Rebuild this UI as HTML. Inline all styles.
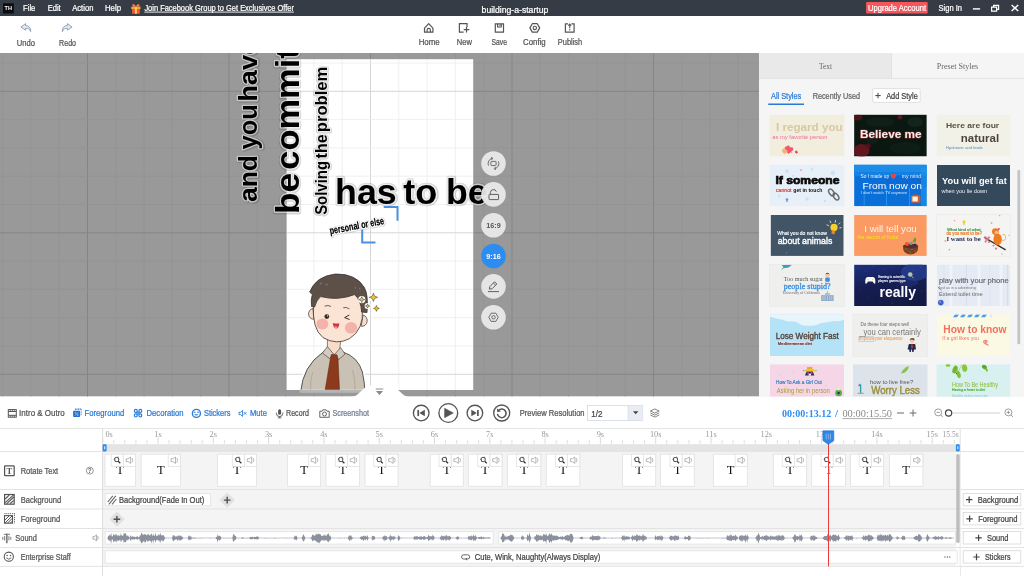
<!DOCTYPE html>
<html><head><meta charset="utf-8"><title>building-a-startup</title>
<style>
html,body{margin:0;padding:0;width:1024px;height:576px;overflow:hidden;background:#fff}
svg{display:block;position:absolute;left:0;top:0;will-change:transform}
text{font-family:"Liberation Sans",sans-serif;white-space:pre}
text.sf{font-family:"Liberation Serif",serif}
text.mn{font-family:"Liberation Mono",monospace}
</style></head><body>
<svg width="1024" height="576" viewBox="0 0 1024 576">
<rect x="0" y="0" width="1024" height="16" fill="#363c45"/>
<rect x="3" y="3.3" width="10.8" height="10.2" fill="#0c0c0e"/>
<text x="4.6" y="9.6" font-size="5" fill="#fff" textLength="7.4" lengthAdjust="spacingAndGlyphs" font-weight="bold">TH</text>
<text x="23.1" y="11" font-size="8.7" fill="#fff" textLength="12.2" lengthAdjust="spacingAndGlyphs" stroke="#fff" stroke-width="0.24">File</text>
<text x="47.7" y="11" font-size="8.7" fill="#fff" textLength="13" lengthAdjust="spacingAndGlyphs" stroke="#fff" stroke-width="0.24">Edit</text>
<text x="72.2" y="11" font-size="8.7" fill="#fff" textLength="21.2" lengthAdjust="spacingAndGlyphs" stroke="#fff" stroke-width="0.24">Action</text>
<text x="105" y="11" font-size="8.7" fill="#fff" textLength="16" lengthAdjust="spacingAndGlyphs" stroke="#fff" stroke-width="0.24">Help</text>
<g>
<rect x="131.3" y="6.6" width="9.2" height="2.6" fill="#f7a23b"/>
<rect x="132" y="9" width="7.8" height="4.7" fill="#f2553d"/>
<rect x="134.9" y="6.6" width="2" height="7.1" fill="#fbd24a"/>
<path d="M135.9 6.6 C133.5 2.5 131.5 4.5 133.2 6.6 Z M135.9 6.6 C138.3 2.5 140.3 4.5 138.6 6.6 Z" fill="#f7a23b" stroke="#f2553d" stroke-width="0.5"/>
</g>
<text x="144.4" y="11" font-size="8.7" fill="#fff" textLength="149.5" lengthAdjust="spacingAndGlyphs" stroke="#fff" stroke-width="0.24">Join Facebook Group to Get Exclusivce Offer</text>
<line x1="144.4" y1="12.1" x2="293.9" y2="12.1" stroke="#fff" stroke-width="0.9" />
<text x="481.6" y="12.8" font-size="8.9" fill="#fff" textLength="66.7" lengthAdjust="spacingAndGlyphs" stroke="#fff" stroke-width="0.24">building-a-startup</text>
<rect x="866.1" y="1.9" width="61.6" height="11.7" fill="#f5565c" rx="1"/>
<text x="868" y="11" font-size="8.7" fill="#fff" textLength="58.1" lengthAdjust="spacingAndGlyphs" stroke="#fff" stroke-width="0.24">Upgrade Account</text>
<text x="938.5" y="11" font-size="8.7" fill="#fff" textLength="23.5" lengthAdjust="spacingAndGlyphs" stroke="#fff" stroke-width="0.24">Sign In</text>
<line x1="972.9" y1="8.9" x2="980.1" y2="8.9" stroke="#fff" stroke-width="1.4" />
<path d="M993.6 7.2 V5.4 H998.6 V9.4 H996.9 M991.6 7.2 H996.6 V11.2 H991.6 Z" fill="none" stroke="#fff" stroke-width="1.2"/>
<path d="M1011.6 5 L1018.2 11 M1018.2 5 L1011.6 11" stroke="#fff" stroke-width="1.5" fill="none"/>
<rect x="0" y="16" width="1024" height="37" fill="#fff"/>
<path d="M25.6 23.6 L20.9 27 L25.6 30.2 V28.3 C28.2 28.2 29.8 29.3 30.7 31.6 C30.9 27.7 28.8 25.6 25.6 25.5 Z" fill="#e3e9f1" stroke="#8a9bb3" stroke-width="0.9" stroke-linejoin="round"/>
<path d="M67.4 23.6 L72.1 27 L67.4 30.2 V28.3 C64.8 28.2 63.2 29.3 62.3 31.6 C62.1 27.7 64.2 25.6 67.4 25.5 Z" fill="#e3e9f1" stroke="#8a9bb3" stroke-width="0.9" stroke-linejoin="round"/>
<text x="16.8" y="46" font-size="8.6" fill="#555" textLength="18.2" lengthAdjust="spacingAndGlyphs" stroke="#555" stroke-width="0.24">Undo</text>
<text x="59.1" y="46" font-size="8.6" fill="#555" textLength="16.9" lengthAdjust="spacingAndGlyphs" stroke="#555" stroke-width="0.24">Redo</text>
<path d="M424.5 28.2 L428.7 23.7 L432.9 28.2 V32.2 H424.5 Z" fill="none" stroke="#555" stroke-width="1.2" stroke-linejoin="round"/>
<path d="M427.1 32.2 V30 A1.65 1.65 0 0 1 430.4 30 V32.2" fill="none" stroke="#555" stroke-width="1.1"/>
<text x="418.7" y="44.9" font-size="8.6" fill="#555" textLength="21" lengthAdjust="spacingAndGlyphs" stroke="#555" stroke-width="0.24">Home</text>
<path d="M467 27 V23.7 H459.4 V32.2 H463.6" fill="none" stroke="#555" stroke-width="1.2"/>
<path d="M466.5 26.9 V32.5 M463.7 29.7 H469.3" fill="none" stroke="#555" stroke-width="1.2"/>
<text x="456.8" y="44.9" font-size="8.6" fill="#555" textLength="15.1" lengthAdjust="spacingAndGlyphs" stroke="#555" stroke-width="0.24">New</text>
<path d="M495.3 23.8 H503.5 V32.1 H495.3 Z M497.6 23.8 V27 H501.2 V23.8" fill="none" stroke="#555" stroke-width="1.2"/>
<path d="M499.9 24.5 V26" stroke="#555" stroke-width="0.9"/>
<text x="491.6" y="44.9" font-size="8.6" fill="#555" textLength="15.4" lengthAdjust="spacingAndGlyphs" stroke="#555" stroke-width="0.24">Save</text>
<path d="M529.9 27.9 L532.3 23.7 H537.3 L539.7 27.9 L537.3 32.1 H532.3 Z" fill="none" stroke="#555" stroke-width="1.2" stroke-linejoin="round"/>
<circle cx="534.8" cy="27.9" r="1.7" fill="none" stroke="#555" stroke-width="1.1"/>
<text x="523.1" y="44.9" font-size="8.6" fill="#555" textLength="22.6" lengthAdjust="spacingAndGlyphs" stroke="#555" stroke-width="0.24">Config</text>
<path d="M568 23.8 H565.4 V32.1 H574.1 V23.8 H571.5" fill="none" stroke="#555" stroke-width="1.2"/>
<path d="M569.75 28.2 V24.4 M568.3 25.6 L569.75 24 L571.2 25.6" fill="none" stroke="#555" stroke-width="1.1"/>
<circle cx="569.75" cy="29.7" r="0.7" fill="#555"/>
<text x="557.8" y="44.9" font-size="8.6" fill="#555" textLength="24.4" lengthAdjust="spacingAndGlyphs" stroke="#555" stroke-width="0.24">Publish</text>
<clipPath id="cc"><rect x="0" y="53" width="759" height="343.6"/></clipPath>
<g clip-path="url(#cc)">
<rect x="0" y="53" width="759" height="343.6" fill="#999999"/>
<line x1="2.6" y1="53" x2="2.6" y2="397" stroke="#939393" stroke-width="0.8" />
<line x1="30.9" y1="53" x2="30.9" y2="397" stroke="#939393" stroke-width="0.8" />
<line x1="59.2" y1="53" x2="59.2" y2="397" stroke="#939393" stroke-width="0.8" />
<line x1="87.5" y1="53" x2="87.5" y2="397" stroke="#858585" stroke-width="1" />
<line x1="115.8" y1="53" x2="115.8" y2="397" stroke="#939393" stroke-width="0.8" />
<line x1="144.1" y1="53" x2="144.1" y2="397" stroke="#939393" stroke-width="0.8" />
<line x1="172.4" y1="53" x2="172.4" y2="397" stroke="#939393" stroke-width="0.8" />
<line x1="200.7" y1="53" x2="200.7" y2="397" stroke="#939393" stroke-width="0.8" />
<line x1="229.0" y1="53" x2="229.0" y2="397" stroke="#858585" stroke-width="1" />
<line x1="257.3" y1="53" x2="257.3" y2="397" stroke="#939393" stroke-width="0.8" />
<line x1="285.6" y1="53" x2="285.6" y2="397" stroke="#939393" stroke-width="0.8" />
<line x1="313.9" y1="53" x2="313.9" y2="397" stroke="#939393" stroke-width="0.8" />
<line x1="342.2" y1="53" x2="342.2" y2="397" stroke="#939393" stroke-width="0.8" />
<line x1="370.5" y1="53" x2="370.5" y2="397" stroke="#858585" stroke-width="1" />
<line x1="398.8" y1="53" x2="398.8" y2="397" stroke="#939393" stroke-width="0.8" />
<line x1="427.1" y1="53" x2="427.1" y2="397" stroke="#939393" stroke-width="0.8" />
<line x1="455.4" y1="53" x2="455.4" y2="397" stroke="#939393" stroke-width="0.8" />
<line x1="483.7" y1="53" x2="483.7" y2="397" stroke="#939393" stroke-width="0.8" />
<line x1="512.0" y1="53" x2="512.0" y2="397" stroke="#858585" stroke-width="1" />
<line x1="540.3" y1="53" x2="540.3" y2="397" stroke="#939393" stroke-width="0.8" />
<line x1="568.6" y1="53" x2="568.6" y2="397" stroke="#939393" stroke-width="0.8" />
<line x1="596.9" y1="53" x2="596.9" y2="397" stroke="#939393" stroke-width="0.8" />
<line x1="625.2" y1="53" x2="625.2" y2="397" stroke="#939393" stroke-width="0.8" />
<line x1="653.5" y1="53" x2="653.5" y2="397" stroke="#858585" stroke-width="1" />
<line x1="681.8" y1="53" x2="681.8" y2="397" stroke="#939393" stroke-width="0.8" />
<line x1="710.1" y1="53" x2="710.1" y2="397" stroke="#939393" stroke-width="0.8" />
<line x1="738.4" y1="53" x2="738.4" y2="397" stroke="#939393" stroke-width="0.8" />
<line x1="0" y1="63.0" x2="759" y2="63.0" stroke="#939393" stroke-width="0.8" />
<line x1="0" y1="91.3" x2="759" y2="91.3" stroke="#858585" stroke-width="1" />
<line x1="0" y1="119.6" x2="759" y2="119.6" stroke="#939393" stroke-width="0.8" />
<line x1="0" y1="147.9" x2="759" y2="147.9" stroke="#939393" stroke-width="0.8" />
<line x1="0" y1="176.2" x2="759" y2="176.2" stroke="#939393" stroke-width="0.8" />
<line x1="0" y1="204.5" x2="759" y2="204.5" stroke="#939393" stroke-width="0.8" />
<line x1="0" y1="232.8" x2="759" y2="232.8" stroke="#858585" stroke-width="1" />
<line x1="0" y1="261.1" x2="759" y2="261.1" stroke="#939393" stroke-width="0.8" />
<line x1="0" y1="289.4" x2="759" y2="289.4" stroke="#939393" stroke-width="0.8" />
<line x1="0" y1="317.7" x2="759" y2="317.7" stroke="#939393" stroke-width="0.8" />
<line x1="0" y1="346.0" x2="759" y2="346.0" stroke="#939393" stroke-width="0.8" />
<line x1="0" y1="374.3" x2="759" y2="374.3" stroke="#858585" stroke-width="1" />
<rect x="286.6" y="59.2" width="186.59999999999997" height="330.8" fill="#fff"/>
<line x1="313.9" y1="59.2" x2="313.9" y2="390" stroke="#ececec" stroke-width="0.8" />
<line x1="342.2" y1="59.2" x2="342.2" y2="390" stroke="#ececec" stroke-width="0.8" />
<line x1="370.5" y1="59.2" x2="370.5" y2="390" stroke="#d6d6d6" stroke-width="1" />
<line x1="398.8" y1="59.2" x2="398.8" y2="390" stroke="#ececec" stroke-width="0.8" />
<line x1="427.1" y1="59.2" x2="427.1" y2="390" stroke="#ececec" stroke-width="0.8" />
<line x1="455.4" y1="59.2" x2="455.4" y2="390" stroke="#ececec" stroke-width="0.8" />
<line x1="286.6" y1="63.0" x2="473.2" y2="63.0" stroke="#ececec" stroke-width="0.8" />
<line x1="286.6" y1="91.3" x2="473.2" y2="91.3" stroke="#d6d6d6" stroke-width="1" />
<line x1="286.6" y1="119.6" x2="473.2" y2="119.6" stroke="#ececec" stroke-width="0.8" />
<line x1="286.6" y1="147.9" x2="473.2" y2="147.9" stroke="#ececec" stroke-width="0.8" />
<line x1="286.6" y1="176.2" x2="473.2" y2="176.2" stroke="#ececec" stroke-width="0.8" />
<line x1="286.6" y1="204.5" x2="473.2" y2="204.5" stroke="#ececec" stroke-width="0.8" />
<line x1="286.6" y1="232.8" x2="473.2" y2="232.8" stroke="#d6d6d6" stroke-width="1" />
<line x1="286.6" y1="261.1" x2="473.2" y2="261.1" stroke="#ececec" stroke-width="0.8" />
<line x1="286.6" y1="289.4" x2="473.2" y2="289.4" stroke="#ececec" stroke-width="0.8" />
<line x1="286.6" y1="317.7" x2="473.2" y2="317.7" stroke="#ececec" stroke-width="0.8" />
<line x1="286.6" y1="346.0" x2="473.2" y2="346.0" stroke="#ececec" stroke-width="0.8" />
<line x1="286.6" y1="374.3" x2="473.2" y2="374.3" stroke="#d6d6d6" stroke-width="1" />
<g font-size="25" font-weight="bold" stroke-linejoin="round" fill="#333" stroke="#333" stroke-width="4.2" opacity="0.2">
<text x="-0.75" y="0" transform="translate(0.5 0.5) translate(257.2 201.3) rotate(-90) scale(1.0595 1)">and</text>
<text x="-0.25" y="0" transform="translate(0.5 0.5) translate(257.2 149.2) rotate(-90) scale(1.0212 1)">you</text>
<text x="-1.75" y="0" transform="translate(0.5 0.5) translate(257.2 99.9) rotate(-90) scale(1.0909 1)">have</text>
</g>
<g font-size="25" font-weight="bold" stroke-linejoin="round" fill="#fff" stroke="#fff" stroke-width="2.4" opacity="0.55">
<text x="-0.75" y="0" transform="translate(257.2 201.3) rotate(-90) scale(1.0595 1)">and</text>
<text x="-0.25" y="0" transform="translate(257.2 149.2) rotate(-90) scale(1.0212 1)">you</text>
<text x="-1.75" y="0" transform="translate(257.2 99.9) rotate(-90) scale(1.0909 1)">have</text>
</g>
<g font-size="25" font-weight="bold" stroke-linejoin="round" fill="#000">
<text x="-0.75" y="0" transform="translate(257.2 201.3) rotate(-90) scale(1.0595 1)">and</text>
<text x="-0.25" y="0" transform="translate(257.2 149.2) rotate(-90) scale(1.0212 1)">you</text>
<text x="-1.75" y="0" transform="translate(257.2 99.9) rotate(-90) scale(1.0909 1)">have</text>
</g>
<g font-size="32.5" font-weight="bold" stroke-linejoin="round" fill="#333" stroke="#333" stroke-width="4.4" opacity="0.2">
<text x="-2.11" y="0" transform="translate(0.5 0.5) translate(298.6 211.7) rotate(-90) scale(1.0863 1)">be</text>
<text x="-1.3" y="0" transform="translate(0.5 0.5) translate(298.6 168.3) rotate(-90) scale(1.0586 1)">committed</text>
</g>
<g font-size="32.5" font-weight="bold" stroke-linejoin="round" fill="#fff" stroke="#fff" stroke-width="2.6" opacity="0.55">
<text x="-2.11" y="0" transform="translate(298.6 211.7) rotate(-90) scale(1.0863 1)">be</text>
<text x="-1.3" y="0" transform="translate(298.6 168.3) rotate(-90) scale(1.0586 1)">committed</text>
</g>
<g font-size="32.5" font-weight="bold" stroke-linejoin="round" fill="#000">
<text x="-2.11" y="0" transform="translate(298.6 211.7) rotate(-90) scale(1.0863 1)">be</text>
<text x="-1.3" y="0" transform="translate(298.6 168.3) rotate(-90) scale(1.0586 1)">committed</text>
</g>
<g font-size="16.8" font-weight="bold" stroke-linejoin="round" fill="#333" stroke="#333" stroke-width="4.0" opacity="0.2">
<text x="-0.5" y="0" transform="translate(0.5 0.5) translate(326.9 214.4) rotate(-90) scale(0.889 1)">Solving</text>
<text x="-0.17" y="0" transform="translate(0.5 0.5) translate(326.9 158.3) rotate(-90) scale(0.9532 1)">the</text>
<text x="-1.09" y="0" transform="translate(0.5 0.5) translate(326.9 131.1) rotate(-90) scale(0.9876 1)">problem</text>
</g>
<g font-size="16.8" font-weight="bold" stroke-linejoin="round" fill="#fff" stroke="#fff" stroke-width="2.2" opacity="0.55">
<text x="-0.5" y="0" transform="translate(326.9 214.4) rotate(-90) scale(0.889 1)">Solving</text>
<text x="-0.17" y="0" transform="translate(326.9 158.3) rotate(-90) scale(0.9532 1)">the</text>
<text x="-1.09" y="0" transform="translate(326.9 131.1) rotate(-90) scale(0.9876 1)">problem</text>
</g>
<g font-size="16.8" font-weight="bold" stroke-linejoin="round" fill="#000">
<text x="-0.5" y="0" transform="translate(326.9 214.4) rotate(-90) scale(0.889 1)">Solving</text>
<text x="-0.17" y="0" transform="translate(326.9 158.3) rotate(-90) scale(0.9532 1)">the</text>
<text x="-1.09" y="0" transform="translate(326.9 131.1) rotate(-90) scale(0.9876 1)">problem</text>
</g>
<g font-size="35" font-weight="bold" stroke-linejoin="round" fill="#333" stroke="#333" stroke-width="4.6" opacity="0.2">
<text x="-2.45" y="0" transform="translate(0.5 0.5) translate(337.6 203.6) scale(1.0222 1)">has</text>
<text x="-0.35" y="0" transform="translate(0.5 0.5) translate(403.7 203.6) scale(1.0311 1)">to</text>
<text x="-2.28" y="0" transform="translate(0.5 0.5) translate(448.3 203.6) scale(1.0195 1)">be</text>
</g>
<g font-size="35" font-weight="bold" stroke-linejoin="round" fill="#fff" stroke="#fff" stroke-width="2.8" opacity="0.55">
<text x="-2.45" y="0" transform="translate(337.6 203.6) scale(1.0222 1)">has</text>
<text x="-0.35" y="0" transform="translate(403.7 203.6) scale(1.0311 1)">to</text>
<text x="-2.28" y="0" transform="translate(448.3 203.6) scale(1.0195 1)">be</text>
</g>
<g font-size="35" font-weight="bold" stroke-linejoin="round" fill="#000">
<text x="-2.45" y="0" transform="translate(337.6 203.6) scale(1.0222 1)">has</text>
<text x="-0.35" y="0" transform="translate(403.7 203.6) scale(1.0311 1)">to</text>
<text x="-2.28" y="0" transform="translate(448.3 203.6) scale(1.0195 1)">be</text>
</g>
<text x="330.7" y="234.6" font-size="10.2" font-weight="bold" lengthAdjust="spacingAndGlyphs" stroke-linejoin="round" textLength="55.2" transform="rotate(-10.6 330.3 234.2)" fill="#444" stroke="#444" stroke-width="3.8499999999999996" opacity="0.2">personal or else</text>
<text x="330.3" y="234.2" font-size="10.2" font-weight="bold" lengthAdjust="spacingAndGlyphs" stroke-linejoin="round" textLength="55.2" transform="rotate(-10.6 330.3 234.2)" fill="#fff" stroke="#fff" stroke-width="2.65">personal or else</text>
<text x="330.3" y="234.2" font-size="10.2" font-weight="bold" lengthAdjust="spacingAndGlyphs" stroke-linejoin="round" textLength="55.2" transform="rotate(-10.6 330.3 234.2)" fill="#000" stroke="#000" stroke-width="0.25">personal or else</text>
<path d="M383.7 207.1 H397.5 V220.7" fill="none" stroke="#4a90e2" stroke-width="2"/>
<path d="M362.2 229.4 V242.6 H375.5" fill="none" stroke="#4a90e2" stroke-width="2"/>
<clipPath id="chc"><rect x="280" y="260" width="120" height="129.8"/></clipPath>
<g clip-path="url(#chc)">
<g fill="#fff" stroke="#fff" stroke-width="4.2" stroke-linejoin="round"><path d="M300.6 392 Q303 366 322.6 352.6 L327.8 348 L339.2 348.6 L343 352 Q358 357 362.4 372 Q364.6 382 365 392 Z"/><path d="M327.4 338 L340.8 340 L339.2 353.6 L334 358 L327.4 351.6 Z"/><path d="M313.6 303.6 Q318 286 338.6 286.6 Q359.6 288.6 362.4 308.6 Q364 329.6 349.6 338.6 Q336.6 345.6 323 337.6 Q311.6 328.6 313.6 303.6 Z"/><path d="M309.6 292 Q316 276 335.6 274 Q356 273.6 364.4 287.6 Q368.6 295 367 312.6 L361.6 312 Q361 300 354.6 294.6 Q338 301 320.6 296.6 Q316.4 300 314.6 307 L311.6 306.6 Q310.6 299 312.4 294.6 Z"/><path d="M313 308.6 A4.4 4.8 0 1 0 313.8 319.2 Z"/><path d="M363 315 A4.4 4.9 0 1 1 361.2 326.2 Z"/></g>
<path d="M300.6 392 Q303 366 322.6 352.6 L327.8 348 L339.2 348.6 L343 352 Q358 357 362.4 372 Q364.6 382 365 392 Z" fill="#c9c1b4" stroke="#3a3230" stroke-width="0.8"/>
<path d="M327.4 338 L340.8 340 L339.2 353.6 L334 358 L327.4 351.6 Z" fill="#f7dcc9" stroke="#3a3230" stroke-width="0.6"/>
<path d="M327.4 346.6 L322.4 353 L329.6 358.6 L333.6 354 Z M340.6 347.6 L345 354 L338.6 359.6 L334.4 354.6 Z" fill="#d3cbbf" stroke="#3a3230" stroke-width="0.6" stroke-linejoin="round"/>
<path d="M331.4 354.4 L337 354.8 L338 358.6 L339.6 392 L324.8 392 L330.4 358.4 Z" fill="#8b3a1c" stroke="#5e2410" stroke-width="0.5"/>
<path d="M312.6 372 Q310 382 310.4 392 M352.6 370 Q355.6 381 355 392" fill="none" stroke="#a9a093" stroke-width="0.7"/>
<path d="M313 308.6 A4.4 4.8 0 1 0 313.8 319.2 Z" fill="#f9dcc9" stroke="#3a3230" stroke-width="0.7"/>
<path d="M363 315 A4.4 4.9 0 1 1 361.2 326.2 Z" fill="#f9dcc9" stroke="#3a3230" stroke-width="0.7"/>
<path d="M313.6 303.6 Q318 286 338.6 286.6 Q359.6 288.6 362.4 308.6 Q364 329.6 349.6 338.6 Q336.6 345.6 323 337.6 Q311.6 328.6 313.6 303.6 Z" fill="#fbe4d4" stroke="#3a3230" stroke-width="0.8"/>
<path d="M309.6 292 Q316 276 335.6 274 Q356 273.6 364.4 287.6 Q368.6 295 367 312.6 L361.6 312 Q361 300 354.6 294.6 Q338 301 320.6 296.6 Q316.4 300 314.6 307 L311.6 306.6 Q310.6 299 312.4 294.6 Z" fill="#5d5048" stroke="#3a3230" stroke-width="0.8" stroke-linejoin="round"/>
<g fill="#8a7c72" opacity="0.8"><circle cx="320.8" cy="283.6" r="1"/><circle cx="326.6" cy="284.6" r="1"/><circle cx="355.4" cy="288" r="0.8"/><circle cx="359.8" cy="288.8" r="0.8"/></g>
<ellipse cx="322.4" cy="324" rx="6" ry="5.6" fill="#f3b3aa"/><ellipse cx="351" cy="327.8" rx="6.2" ry="5.8" fill="#f3b3aa"/>
<circle cx="326.8" cy="316.6" r="2.4" fill="#3a2c28"/><circle cx="327.6" cy="315.8" r="0.6" fill="#fff"/>
<path d="M349 315.2 L344.6 317.6 L349.2 319.4" fill="none" stroke="#3a2c28" stroke-width="1" stroke-linejoin="round" stroke-linecap="round"/>
<path d="M325 306 Q328 304.8 330.6 306.2 M343.6 307.6 Q346.6 306.8 349 308.6" fill="none" stroke="#4a3a34" stroke-width="0.8" stroke-linecap="round"/>
<path d="M332.8 323 Q336 323.8 339.4 323.4 Q338.6 328.6 335.8 328.6 Q333.4 328.2 332.8 323 Z" fill="#d8323a"/><path d="M334.4 326.6 Q336 325.8 337.6 326.8 Q336.6 328.6 335.8 328.6 Q334.8 328.4 334.4 326.6Z" fill="#f59a9a"/>
<g stroke="#fff" stroke-width="2.4" fill="#fff"><circle cx="373.4" cy="297.3" r="3.2"/><circle cx="376.4" cy="308.4" r="2.4"/><circle cx="361.8" cy="299.6" r="2.4"/><circle cx="367.6" cy="306" r="1.8"/></g>
<path d="M373.4 293.1 L374.57599999999996 296.124 L377.59999999999997 297.3 L374.57599999999996 298.476 L373.4 301.5 L372.224 298.476 L369.2 297.3 L372.224 296.124 Z" fill="#f3c62f" stroke="#3a3220" stroke-width="0.5" stroke-linejoin="round"/>
<path d="M376.4 305.4 L377.23999999999995 307.56 L379.4 308.4 L377.23999999999995 309.23999999999995 L376.4 311.4 L375.56 309.23999999999995 L373.4 308.4 L375.56 307.56 Z" fill="#f3c62f" stroke="#3a3220" stroke-width="0.5" stroke-linejoin="round"/>
<path d="M361.8 296.6 L362.64 298.76000000000005 L364.8 299.6 L362.64 300.44 L361.8 302.6 L360.96000000000004 300.44 L358.8 299.6 L360.96000000000004 298.76000000000005 Z" fill="#f3c62f" stroke="#3a3220" stroke-width="0.5" stroke-linejoin="round"/>
<path d="M367.6 303.8 L368.216 305.384 L369.8 306 L368.216 306.616 L367.6 308.2 L366.98400000000004 306.616 L365.40000000000003 306 L366.98400000000004 305.384 Z" fill="#f3c62f" stroke="#3a3220" stroke-width="0.5" stroke-linejoin="round"/>
</g>
<rect x="299.5" y="390" width="66.5" height="2.8" fill="#fff" opacity="0.28"/>
<circle cx="493.5" cy="163.5" r="12.3" fill="#ebebeb" fill-opacity="0.93"/>
<circle cx="493.5" cy="194.4" r="12.3" fill="#ebebeb" fill-opacity="0.93"/>
<circle cx="493.5" cy="225.3" r="12.3" fill="#ebebeb" fill-opacity="0.93"/>
<circle cx="493.5" cy="286.4" r="12.3" fill="#ebebeb" fill-opacity="0.93"/>
<circle cx="493.5" cy="317.3" r="12.3" fill="#ebebeb" fill-opacity="0.93"/>
<circle cx="493.5" cy="256" r="12.3" fill="#2d8cf0"/>
<g fill="none" stroke="#606060" stroke-width="0.9"><rect x="490.9" y="161.4" width="5.2" height="4.2" rx="0.6"/><path d="M488.5 165.6 A5.4 5.4 0 0 1 492.4 158.3"/><path d="M498.5 161.4 A5.4 5.4 0 0 1 494.6 168.7"/><path d="M491 157.2 L492.8 158.4 L491.4 160" /><path d="M496 169.8 L494.2 168.6 L495.6 167"/></g>
<g fill="none" stroke="#606060" stroke-width="1"><rect x="489" y="194.4" width="9.6" height="5.2" rx="0.6"/><path d="M490.4 194.4 V192.6 A3.1 3.1 0 0 1 496.4 191.6"/></g>
<text x="493.5" y="227.9" font-size="7.4" fill="#555" textLength="14.4" lengthAdjust="spacingAndGlyphs" text-anchor="middle" font-weight="bold">16:9</text>
<text x="493.5" y="258.6" font-size="7.4" fill="#fff" textLength="14.4" lengthAdjust="spacingAndGlyphs" text-anchor="middle" font-weight="bold">9:16</text>
<g fill="none" stroke="#606060" stroke-width="1"><path d="M488 291.6 H499"/><path d="M489.4 289.2 L489.8 286.6 L494.6 281.8 L496.8 284 L492 288.8 Z" stroke-linejoin="round"/><path d="M493.4 283 L495.6 285.2"/></g>
<g fill="none" stroke="#606060" stroke-width="0.9"><path d="M488.8 317.3 L491.15 313.2 H495.85 L498.2 317.3 L495.85 321.4 H491.15 Z" stroke-linejoin="round"/><circle cx="493.5" cy="317.3" r="1.7"/></g>
<path d="M349 397.2 C361 397.2 361 385.2 373 385.2 H387.5 C399.5 385.2 399.5 397.2 412 397.2 Z" fill="#fff"/>
<path d="M375.7 389 H383.3" stroke="#8a8a8a" stroke-width="1"/><path d="M375.9 391 H383.1 L379.5 394.9 Z" fill="#8a8a8a"/>
</g>
<g id="panel">
<rect x="759" y="53" width="265" height="344" fill="#f5f5f5"/>
<rect x="759.3" y="53" width="132.2" height="25.4" fill="#e9e9e9"/>
<line x1="759" y1="78.4" x2="1024" y2="78.4" stroke="#dedede" stroke-width="0.8" />
<line x1="891.5" y1="53" x2="891.5" y2="78.4" stroke="#dedede" stroke-width="0.8" />
<text x="825.5" y="69.1" font-size="8.3" fill="#666" textLength="13" lengthAdjust="spacingAndGlyphs" text-anchor="middle" class="sf">Text</text>
<text x="957.5" y="69.1" font-size="8.3" fill="#666" textLength="41.5" lengthAdjust="spacingAndGlyphs" text-anchor="middle" class="sf">Preset Styles</text>
<text x="771" y="98.6" font-size="8.6" fill="#2b7bd6" textLength="30.2" lengthAdjust="spacingAndGlyphs" stroke="#2b7bd6" stroke-width="0.24">All Styles</text>
<line x1="768.2" y1="104.2" x2="804" y2="104.2" stroke="#2b7bd6" stroke-width="1.4" />
<text x="812.7" y="98.6" font-size="8.6" fill="#666" textLength="47.3" lengthAdjust="spacingAndGlyphs" stroke="#666" stroke-width="0.24">Recently Used</text>
<rect x="872.6" y="88.6" width="47.6" height="13.8" fill="#fff" stroke="#d9d9d9" stroke-width="0.8" rx="1.5"/>
<path d="M875.3 95.6 H880.7 M878 92.9 V98.3" stroke="#444" stroke-width="1"/>
<text x="886.2" y="98.6" font-size="8.6" fill="#444" textLength="31.6" lengthAdjust="spacingAndGlyphs" stroke="#444" stroke-width="0.24">Add Style</text>
<rect x="1017.4" y="170" width="2.8" height="174.2" fill="#c4c4c4" rx="1"/>
<clipPath id="pc"><rect x="759" y="53" width="265" height="343.6"/></clipPath>
<g clip-path="url(#pc)">
<clipPath id="t1"><rect x="769.3" y="114.6" width="75.3" height="41.9"/></clipPath>
<g clip-path="url(#t1)">
<rect x="769.3" y="114.6" width="75.3" height="41.9" fill="#f2eedd"/>
<text x="776" y="131.1" font-size="11.4" fill="#d8c7a4" textLength="66.7" lengthAdjust="spacingAndGlyphs" font-weight="bold">I regard you</text>
<text x="772.3" y="138.5" font-size="5.4" fill="#ee6d9c" textLength="55.2" lengthAdjust="spacingAndGlyphs">as my favorite person</text>
<path d="M786.5 146.5 c1.2-2 4-1 3.4 1.2 c2.6-1.6 4.6 1 2.6 3 l-4 3.2 l-3.2-3.4 c-1.6-2 0-4.4 1.2-4z" fill="#f4566e"/><path d="M783 149 c1-1.4 3-.6 2.6 1 c1.4-.6 2.6 1 1.4 2.2 l-2.6 2 l-2-2.2 c-1-1.2-.2-2.8.6-3z" fill="#f6b183"/><path d="M795.5 151 c.6-.8 1.6-.2 1.3.6 c.8-.5 1.6.4.9 1.1 l-1.5 1.1 l-1.1-1.2 c-.5-.7 0-1.5.4-1.6z" fill="#e8436a"/><circle cx="791.5" cy="152.6" r="0.8" fill="#f3a0b6"/>
</g>
<clipPath id="t2"><rect x="854.1" y="114.6" width="72.7" height="41.9"/></clipPath>
<g clip-path="url(#t2)">
<rect x="854.1" y="114.6" width="72.7" height="41.9" fill="#0b1812"/>
<g><ellipse cx="861.5" cy="150.5" rx="8" ry="6.5" fill="#6e1620" opacity="0.85"/><ellipse cx="868" cy="146" rx="3" ry="2.4" fill="#5a1219" opacity="0.8"/><ellipse cx="858" cy="117.6" rx="4.2" ry="3" fill="#5c121a" opacity="0.8"/><ellipse cx="900" cy="117.2" rx="2.4" ry="2.2" fill="#6e1620" opacity="0.8"/><ellipse cx="880" cy="122" rx="14" ry="5" fill="#122219" opacity="0.7"/><ellipse cx="905" cy="148" rx="16" ry="6" fill="#101f17" opacity="0.7"/><ellipse cx="915" cy="122" rx="8" ry="5" fill="#16291f" opacity="0.7"/><ellipse cx="872" cy="140" rx="6" ry="4" fill="#112119" opacity="0.7"/></g>
<text x="860" y="138.4" font-size="10.6" fill="#f2ecec" textLength="61.6" lengthAdjust="spacingAndGlyphs" font-weight="bold" stroke="#8a2d28" stroke-width="1.1" paint-order="stroke" stroke-linejoin="round">Believe me</text>
</g>
<clipPath id="t3"><rect x="936.3" y="114.6" width="74.3" height="41.9"/></clipPath>
<g clip-path="url(#t3)">
<rect x="936.3" y="114.6" width="74.3" height="41.9" fill="#f1f1e8"/>
<text x="945.9" y="127.7" font-size="8" fill="#5a4f45" textLength="53.3" lengthAdjust="spacingAndGlyphs" font-weight="bold">Here are four</text>
<text x="960.8" y="142" font-size="11.2" fill="#4e433b" textLength="38.4" lengthAdjust="spacingAndGlyphs" font-weight="bold">natural</text>
<text x="945.9" y="149.3" font-size="4.4" fill="#4a86c8" textLength="36.8" lengthAdjust="spacingAndGlyphs">Hyaluronic acid foods</text>
</g>
<clipPath id="t4"><rect x="769.3" y="164.6" width="75.3" height="41.7"/></clipPath>
<g clip-path="url(#t4)">
<rect x="769.3" y="164.6" width="75.3" height="41.7" fill="#e7f0f8"/>
<g fill="#cfe2f1"><circle cx="787" cy="171" r="2"/><circle cx="793" cy="176" r="1.3"/><circle cx="812" cy="169" r="1.5"/><circle cx="833" cy="173" r="2.4"/><circle cx="807" cy="199" r="1.8"/><circle cx="825" cy="201" r="1.2"/><circle cx="779" cy="196" r="1.4"/><circle cx="820" cy="186" r="1.1"/></g>
<circle cx="787" cy="199.6" r="1.3" fill="#5aa0e0"/><circle cx="787" cy="201.2" r="0.8" fill="#e8703a"/><circle cx="801" cy="170.2" r="0.9" fill="#e89a9a"/>
<text x="775.4" y="184" font-size="10.6" fill="#0a0a0a" textLength="64.1" lengthAdjust="spacingAndGlyphs" font-weight="bold" stroke="#0a0a0a" stroke-width="0.7">If someone</text>
<text x="776" y="191.6" font-size="5" fill="#d8433a" textLength="15.5" lengthAdjust="spacingAndGlyphs"  stroke="#d8433a" stroke-width="0.2">cannot</text>
<text x="793.3" y="191.6" font-size="5" fill="#111" textLength="29.1" lengthAdjust="spacingAndGlyphs" font-weight="bold">get in touch</text>
<g fill="none" stroke="#6b6b6b" stroke-width="1.5"><ellipse cx="831.5" cy="192.5" rx="2.2" ry="3.8" transform="rotate(-35 831.5 192.5)"/><ellipse cx="836" cy="196.5" rx="2.2" ry="3.8" transform="rotate(-35 836 196.5)"/></g>
</g>
<clipPath id="t5"><rect x="854.1" y="164.6" width="72.7" height="41.7"/></clipPath>
<g clip-path="url(#t5)">
<rect x="854.1" y="164.6" width="72.7" height="41.7" fill="#0b6fda"/>
<rect x="854.1" y="164.6" width="72.7" height="8" fill="#1b8ce8"/>
<rect x="854.1" y="172.6" width="72.7" height="3.6" fill="#1380e2"/>
<rect x="886" y="175" width="40.8" height="12" fill="#0a64cc" opacity="0.45"/>
<rect x="921" y="168" width="5.8" height="38.3" fill="#1d97ee" opacity="0.6"/>
<line x1="864.2" y1="186" x2="864.2" y2="206.3" stroke="#2fa4f2" stroke-width="0.7" />
<line x1="886.5" y1="186" x2="886.5" y2="206.3" stroke="#2fa4f2" stroke-width="0.7" />
<line x1="909.5" y1="188" x2="909.5" y2="206.3" stroke="#2fa4f2" stroke-width="0.7" />
<text x="860.5" y="178" font-size="4.8" fill="#e6f1fc" textLength="28.6" lengthAdjust="spacingAndGlyphs">So I made up</text>
<path d="M893.4 175 c.6-1.6 3-1.2 2.9.6 c0 1.6-2 2.6-2.9 3.6 c-.9-1-2.9-2-2.9-3.6 c-.1-1.8 2.3-2.2 2.9-.6z" fill="#f0453c"/>
<text x="901.8" y="178" font-size="4.8" fill="#e6f1fc" textLength="19.3" lengthAdjust="spacingAndGlyphs">my mind</text>
<text x="862.4" y="188.5" font-size="9.9" fill="#fff" textLength="59.6" lengthAdjust="spacingAndGlyphs">From now on</text>
<text x="861.1" y="193.8" font-size="4" fill="#d6e8fb" textLength="46" lengthAdjust="spacingAndGlyphs">I don't watch TV anymore</text>
<g><path d="M913 193.4 L915.4 195.4 L918 193.2" fill="none" stroke="#b4562a" stroke-width="0.7"/><rect x="911" y="195.2" width="9.4" height="7.6" rx="1" fill="#c8602c"/><rect x="912.4" y="196.5" width="5.4" height="5" fill="#fbeee2"/></g>
</g>
<clipPath id="t6"><rect x="937" y="165" width="73" height="41"/></clipPath>
<g clip-path="url(#t6)">
<rect x="937" y="165" width="73" height="41" fill="#34495c"/>
<g fill="#41576b"><circle cx="940" cy="168.0" r="0.4"/><circle cx="946" cy="168.0" r="0.4"/><circle cx="952" cy="168.0" r="0.4"/><circle cx="958" cy="168.0" r="0.4"/><circle cx="964" cy="168.0" r="0.4"/><circle cx="970" cy="168.0" r="0.4"/><circle cx="976" cy="168.0" r="0.4"/><circle cx="982" cy="168.0" r="0.4"/><circle cx="988" cy="168.0" r="0.4"/><circle cx="994" cy="168.0" r="0.4"/><circle cx="1000" cy="168.0" r="0.4"/><circle cx="1006" cy="168.0" r="0.4"/><circle cx="943" cy="173.4" r="0.4"/><circle cx="949" cy="173.4" r="0.4"/><circle cx="955" cy="173.4" r="0.4"/><circle cx="961" cy="173.4" r="0.4"/><circle cx="967" cy="173.4" r="0.4"/><circle cx="973" cy="173.4" r="0.4"/><circle cx="979" cy="173.4" r="0.4"/><circle cx="985" cy="173.4" r="0.4"/><circle cx="991" cy="173.4" r="0.4"/><circle cx="997" cy="173.4" r="0.4"/><circle cx="1003" cy="173.4" r="0.4"/><circle cx="1009" cy="173.4" r="0.4"/><circle cx="940" cy="178.8" r="0.4"/><circle cx="946" cy="178.8" r="0.4"/><circle cx="952" cy="178.8" r="0.4"/><circle cx="958" cy="178.8" r="0.4"/><circle cx="964" cy="178.8" r="0.4"/><circle cx="970" cy="178.8" r="0.4"/><circle cx="976" cy="178.8" r="0.4"/><circle cx="982" cy="178.8" r="0.4"/><circle cx="988" cy="178.8" r="0.4"/><circle cx="994" cy="178.8" r="0.4"/><circle cx="1000" cy="178.8" r="0.4"/><circle cx="1006" cy="178.8" r="0.4"/><circle cx="943" cy="184.2" r="0.4"/><circle cx="949" cy="184.2" r="0.4"/><circle cx="955" cy="184.2" r="0.4"/><circle cx="961" cy="184.2" r="0.4"/><circle cx="967" cy="184.2" r="0.4"/><circle cx="973" cy="184.2" r="0.4"/><circle cx="979" cy="184.2" r="0.4"/><circle cx="985" cy="184.2" r="0.4"/><circle cx="991" cy="184.2" r="0.4"/><circle cx="997" cy="184.2" r="0.4"/><circle cx="1003" cy="184.2" r="0.4"/><circle cx="1009" cy="184.2" r="0.4"/><circle cx="940" cy="189.6" r="0.4"/><circle cx="946" cy="189.6" r="0.4"/><circle cx="952" cy="189.6" r="0.4"/><circle cx="958" cy="189.6" r="0.4"/><circle cx="964" cy="189.6" r="0.4"/><circle cx="970" cy="189.6" r="0.4"/><circle cx="976" cy="189.6" r="0.4"/><circle cx="982" cy="189.6" r="0.4"/><circle cx="988" cy="189.6" r="0.4"/><circle cx="994" cy="189.6" r="0.4"/><circle cx="1000" cy="189.6" r="0.4"/><circle cx="1006" cy="189.6" r="0.4"/><circle cx="943" cy="195.0" r="0.4"/><circle cx="949" cy="195.0" r="0.4"/><circle cx="955" cy="195.0" r="0.4"/><circle cx="961" cy="195.0" r="0.4"/><circle cx="967" cy="195.0" r="0.4"/><circle cx="973" cy="195.0" r="0.4"/><circle cx="979" cy="195.0" r="0.4"/><circle cx="985" cy="195.0" r="0.4"/><circle cx="991" cy="195.0" r="0.4"/><circle cx="997" cy="195.0" r="0.4"/><circle cx="1003" cy="195.0" r="0.4"/><circle cx="1009" cy="195.0" r="0.4"/><circle cx="940" cy="200.4" r="0.4"/><circle cx="946" cy="200.4" r="0.4"/><circle cx="952" cy="200.4" r="0.4"/><circle cx="958" cy="200.4" r="0.4"/><circle cx="964" cy="200.4" r="0.4"/><circle cx="970" cy="200.4" r="0.4"/><circle cx="976" cy="200.4" r="0.4"/><circle cx="982" cy="200.4" r="0.4"/><circle cx="988" cy="200.4" r="0.4"/><circle cx="994" cy="200.4" r="0.4"/><circle cx="1000" cy="200.4" r="0.4"/><circle cx="1006" cy="200.4" r="0.4"/><circle cx="943" cy="205.8" r="0.4"/><circle cx="949" cy="205.8" r="0.4"/><circle cx="955" cy="205.8" r="0.4"/><circle cx="961" cy="205.8" r="0.4"/><circle cx="967" cy="205.8" r="0.4"/><circle cx="973" cy="205.8" r="0.4"/><circle cx="979" cy="205.8" r="0.4"/><circle cx="985" cy="205.8" r="0.4"/><circle cx="991" cy="205.8" r="0.4"/><circle cx="997" cy="205.8" r="0.4"/><circle cx="1003" cy="205.8" r="0.4"/><circle cx="1009" cy="205.8" r="0.4"/></g>
<text x="942" y="184.4" font-size="9.4" fill="#fff" textLength="64.8" lengthAdjust="spacingAndGlyphs" font-weight="bold">You will get fat</text>
<text x="941.4" y="192.9" font-size="5.6" fill="#f0f3f6" textLength="45.7" lengthAdjust="spacingAndGlyphs">when you lie down</text>
</g>
<clipPath id="t7"><rect x="770.6" y="215" width="73.1" height="40.9"/></clipPath>
<g clip-path="url(#t7)">
<rect x="770.6" y="215" width="73.1" height="40.9" fill="#425567"/>
<text x="777.3" y="234.7" font-size="5" fill="#eef2f5" textLength="49.5" lengthAdjust="spacingAndGlyphs"  stroke="#eef2f5" stroke-width="0.2">What you do not know</text>
<text x="777.7" y="243.5" font-size="8.9" fill="#fff" textLength="54.6" lengthAdjust="spacingAndGlyphs"  stroke="#fff" stroke-width="0.36">about animals</text>
<g><path d="M829 226 L826.6 224.6 M831 223 L829.8 220.6 M835.2 222.6 L835.6 220 M838.4 224.4 L840.2 222.6 M839.4 228 L841.6 227.6" stroke="#f4f1d8" stroke-width="0.8"/><circle cx="834" cy="227.4" r="3.6" fill="#f6cf2a"/><path d="M832 230 L835.6 231.4 L834 234.6 L831.4 233.4 Z" fill="#e8862c"/></g>
<circle cx="786.4" cy="252.8" r="0.5" fill="#8aa0ff"/>
</g>
<clipPath id="t8"><rect x="854.1" y="215" width="72.7" height="40.9"/></clipPath>
<g clip-path="url(#t8)">
<rect x="854.1" y="215" width="72.7" height="40.9" fill="#fb9a62"/>
<text x="864.3" y="231.5" font-size="8.6" fill="#fdf3ea" textLength="52.4" lengthAdjust="spacingAndGlyphs">I will tell you</text>
<text x="857.3" y="238.8" font-size="5" fill="#f7e413" textLength="41" lengthAdjust="spacingAndGlyphs">the secret of fruits</text>
<g><path d="M903 246 Q902.6 254.4 910.6 254.4 Q918.6 254.4 918.2 246 Z" fill="#7a3f28"/><ellipse cx="910.6" cy="246" rx="7.6" ry="2.2" fill="#5d2f1f"/><circle cx="907" cy="244" r="2" fill="#e8552c"/><circle cx="911" cy="243.2" r="1.8" fill="#8d8fa8"/><circle cx="915" cy="245" r="1.6" fill="#2b2f6a"/><path d="M912.6 242 q1-4 2.8-4.6 q1.8 2.4-.4 5z" fill="#4cab3a"/><g fill="#7bc043"><circle cx="906" cy="249" r="0.5"/><circle cx="909" cy="251" r="0.5"/><circle cx="912" cy="249.4" r="0.5"/><circle cx="915" cy="251" r="0.5"/><circle cx="910.5" cy="252.8" r="0.5"/></g></g>
</g>
<clipPath id="t9"><rect x="936.3" y="214.6" width="74.3" height="41.6"/></clipPath>
<g clip-path="url(#t9)">
<rect x="936.3" y="214.6" width="74.3" height="41.6" fill="#f4f4f2"/>
<g fill="#f29ab5"><circle cx="954.6" cy="220.6" r="0.8"/><circle cx="999.6" cy="215.6" r="0.8"/><circle cx="991.6" cy="223" r="0.9"/><circle cx="1009" cy="235.4" r="0.7"/><circle cx="945.4" cy="241" r="0.9"/><circle cx="949.4" cy="249.6" r="0.9"/><circle cx="1002" cy="254" r="0.7"/></g>
<circle cx="964" cy="221.8" r="1.5" fill="#f4cf2c"/><rect x="963.5" y="223.2" width="1" height="1.6" fill="#d8a020"/>
<text x="947.1" y="230.9" font-size="4.2" fill="#3f8f4f" textLength="33.7" lengthAdjust="spacingAndGlyphs"  stroke="#3f8f4f" stroke-width="0.17">What kind of what</text>
<text x="946.5" y="235.3" font-size="4.6" fill="#ec7b25" textLength="35.5" lengthAdjust="spacingAndGlyphs"  stroke="#ec7b25" stroke-width="0.18">do you want to be?</text>
<text x="946.5" y="241.3" font-size="6.4" fill="#2a3050" textLength="34.3" lengthAdjust="spacingAndGlyphs" font-weight="bold" class="sf">I want to be</text>
<g><path d="M984 237.2 L1005.6 249.9" stroke="#2c2c2c" stroke-width="1.3"/><path d="M1001 240 q5.4 1.6 4.6-3.4 q-.6-3 -3-2" fill="none" stroke="#f0a060" stroke-width="0.8"/><ellipse cx="997.6" cy="239.4" rx="4.2" ry="5.8" fill="#ee7d22"/><circle cx="995.4" cy="231.6" r="3.4" fill="#ee7d22"/><circle cx="996.4" cy="232.4" r="1.7" fill="#f5b898"/><circle cx="998.8" cy="229" r="1" fill="#e8436a"/><g fill="#ee6a86"><circle cx="987" cy="239.6" r="1.4"/><circle cx="985.4" cy="237.4" r="1.2"/><circle cx="988.8" cy="237.6" r="1.2"/><circle cx="985.6" cy="241.6" r="1.1"/><circle cx="989" cy="242" r="1.1"/><circle cx="996" cy="248.6" r="1.1"/><circle cx="993.4" cy="245.6" r="0.9"/></g></g>
</g>
<rect x="936.3" y="214.6" width="74.3" height="41.6" fill="none" stroke="#e8e8e6" stroke-width="0.6"/>
<clipPath id="t10"><rect x="769.3" y="264.3" width="75.3" height="42.2"/></clipPath>
<g clip-path="url(#t10)">
<rect x="769.3" y="264.3" width="75.3" height="42.2" fill="#efefed"/>
<path d="M781 270.8 L783.4 267 L781.6 265 L792 264.8 L788.6 267.6 L783.6 268.2 Z" fill="#3c9fb2"/>
<text x="783.7" y="281.1" font-size="6.6" fill="#555" textLength="39.3" lengthAdjust="spacingAndGlyphs" class="sf">Too much sugar</text>
<text x="783.7" y="289.1" font-size="8.2" fill="#3b8fe0" textLength="46.9" lengthAdjust="spacingAndGlyphs" class="sf"  stroke="#3b8fe0" stroke-width="0.33">people stupid?</text>
<text x="782.8" y="294.2" font-size="4.3" fill="#666" textLength="37.1" lengthAdjust="spacingAndGlyphs" class="sf">University of California</text>
<g><circle cx="827.5" cy="275" r="2.2" fill="#f1c9a5"/><path d="M825.2 274.4 q2.3-3.4 4.6 0 q-2.3-1.2-4.6 0z" fill="#5a3a26"/><rect x="825.2" y="277.4" width="4.6" height="4.4" rx="1" fill="#3f8fd8"/></g>
<g><rect x="821.2" y="295.2" width="12.4" height="5.8" fill="#8aa6c4"/><rect x="825" y="293" width="4.8" height="2.4" fill="#a9bfd6"/><path d="M827.4 293 V291.2" stroke="#d86a5a" stroke-width="0.6"/><g stroke="#f0f4f8" stroke-width="0.5"><path d="M823 296 V300.4 M825 296 V300.4 M827.4 296 V300.4 M829.8 296 V300.4 M831.8 296 V300.4"/></g></g>
</g>
<rect x="769.3" y="264.3" width="75.3" height="42.2" fill="none" stroke="#e6e6e4" stroke-width="0.6"/>
<linearGradient id="g11" x1="0" y1="0" x2="0.3" y2="1"><stop offset="0" stop-color="#1d2f80"/><stop offset="0.55" stop-color="#151d52"/><stop offset="1" stop-color="#141a46"/></linearGradient>
<clipPath id="t11"><rect x="854.1" y="264.6" width="72.7" height="41.4"/></clipPath>
<g clip-path="url(#t11)">
<rect x="854.1" y="264.6" width="72.7" height="41.4" fill="url(#g11)"/>
<ellipse cx="915" cy="272" rx="14" ry="9" fill="#2c4aa6" opacity="0.55"/><ellipse cx="908" cy="282" rx="10" ry="5" fill="#2a3f92" opacity="0.4"/>
<g fill="#8fa6e8" opacity="0.8"><circle cx="858" cy="268" r="0.35"/><circle cx="866" cy="271" r="0.35"/><circle cx="873" cy="266" r="0.35"/><circle cx="884" cy="269" r="0.35"/><circle cx="893" cy="267" r="0.35"/><circle cx="899" cy="272" r="0.35"/><circle cx="905" cy="268" r="0.35"/><circle cx="913" cy="270" r="0.35"/><circle cx="921" cy="267" r="0.35"/><circle cx="924" cy="276" r="0.35"/><circle cx="918" cy="283" r="0.35"/><circle cx="911" cy="287" r="0.35"/><circle cx="903" cy="291" r="0.35"/><circle cx="922" cy="291" r="0.35"/><circle cx="916" cy="299" r="0.35"/><circle cx="860" cy="290" r="0.35"/><circle cx="868" cy="298" r="0.35"/><circle cx="880" cy="302" r="0.35"/><circle cx="892" cy="303" r="0.35"/><circle cx="861" cy="280" r="0.35"/><circle cx="890" cy="275" r="0.35"/><circle cx="897" cy="286" r="0.35"/></g>
<g><path d="M865.4 283.6 q-.8-6.4 2.4-6.6 h5 q3.2.2 2.4 6.6 q-1.6.6-2.6-2 h-4.6 q-1 2.6-2.6 2z" fill="#fbfbf4"/><circle cx="868" cy="279.6" r="0.7" fill="#e8d44a"/><circle cx="872.8" cy="279.6" r="0.7" fill="#e8d44a"/></g>
<text x="878" y="277.6" font-size="3.6" fill="#e8ecf8" textLength="27" lengthAdjust="spacingAndGlyphs"  stroke="#e8ecf8" stroke-width="0.14">Gaming is scientific</text>
<text x="878" y="281.7" font-size="3.6" fill="#e8ecf8" textLength="27.4" lengthAdjust="spacingAndGlyphs"  stroke="#e8ecf8" stroke-width="0.14">players games type</text>
<circle cx="910.2" cy="274.4" r="2" fill="#8fd0f4" stroke="#d8c04a" stroke-width="0.6"/><path d="M911.6 276 L913.4 278.2" stroke="#d8c04a" stroke-width="0.8"/>
<text x="879.5" y="296.7" font-size="14.2" fill="#fff" textLength="36.5" lengthAdjust="spacingAndGlyphs" font-weight="bold">really</text>
</g>
<clipPath id="t12"><rect x="937" y="264.6" width="73" height="41.4"/></clipPath>
<g clip-path="url(#t12)">
<rect x="937" y="264.6" width="73" height="41.4" fill="#e5ebf5"/>
<g stroke="#f3f6fb" stroke-width="3" opacity="0.8"><path d="M951 264.6 V306 M979 264.6 V306 M1001 264.6 V306"/></g><g stroke="#c5cfdf" stroke-width="0.5"><path d="M966.4 264.6 V306 M1007.6 264.6 V306"/></g><g stroke="#d6deeb" stroke-width="0.5"><path d="M944 264.6 V306 M990 264.6 V306"/></g>
<circle cx="940.8" cy="302.6" r="2.8" fill="#3d62c4"/><circle cx="940" cy="301.8" r="1.2" fill="#6f8fe0"/>
<path d="M938 287 L941.6 290.4" stroke="#4d78d0" stroke-width="0.8"/>
<text x="938.9" y="283.4" font-size="7.7" fill="#6a6a6a" textLength="69.8" lengthAdjust="spacingAndGlyphs" stroke="#6a6a6a" stroke-width="0.2">play with your phone</text>
<text x="938.2" y="289.1" font-size="4" fill="#777" textLength="37.5" lengthAdjust="spacingAndGlyphs">Just as in a advertising</text>
<text x="938.9" y="295.7" font-size="6" fill="#666" textLength="43.8" lengthAdjust="spacingAndGlyphs">Extend toilet time</text>
</g>
<clipPath id="t13"><rect x="770" y="314.3" width="74" height="41.7"/></clipPath>
<g clip-path="url(#t13)">
<rect x="770" y="314.3" width="74" height="41.7" fill="#b4e3f8"/>
<path d="M770 314.3 H844 V319.4 Q840 321.6 836 321 Q830 321.4 826 322.6 Q821 322.4 818 324.4 Q813 326.4 808 325.6 Q802 326.2 799 323.4 Q796 321.2 792 321.6 Q786 321.8 782 319.6 Q776 319 770 316.6 Z" fill="#e8f6fc"/>
<text x="775.7" y="338.5" font-size="8.4" fill="#574238" textLength="63.2" lengthAdjust="spacingAndGlyphs"  stroke="#574238" stroke-width="0.34">Lose Weight Fast</text>
<rect x="777.4" y="341.3" width="34.8" height="4" fill="#f0d4dc" opacity="0.8"/>
<text x="777.7" y="344.6" font-size="4.1" fill="#4a3c3c" textLength="34.3" lengthAdjust="spacingAndGlyphs"  stroke="#4a3c3c" stroke-width="0.16">Mediterranean diet</text>
</g>
<clipPath id="t14"><rect x="852.9" y="314.3" width="74.8" height="42"/></clipPath>
<g clip-path="url(#t14)">
<rect x="852.9" y="314.3" width="74.8" height="42" fill="#efefed"/>
<text x="860.5" y="325.5" font-size="4.8" fill="#666" textLength="48.5" lengthAdjust="spacingAndGlyphs">Do these four steps well</text>
<text x="859.2" y="334.7" font-size="9.3" fill="#777" textLength="61.6" lengthAdjust="spacingAndGlyphs">_you can certainly</text>
<rect x="858.9" y="336.6" width="15" height="4.8" fill="none" stroke="#999" stroke-width="0.4" rx="0.8"/>
<text x="859.2" y="340.4" font-size="4.6" fill="#ee8a3a" textLength="43.2" lengthAdjust="spacingAndGlyphs">Improve your eloquence</text>
<g><circle cx="912" cy="340.8" r="2.3" fill="#f1c9a5"/><path d="M909.6 340 q1-3 4.6-1.6 q.6 1.2 0 2 q-2-1.6-4.6-.4z" fill="#6a3f26"/><path d="M908.8 344 h6.4 l.8 5.4 h-2 l-.4 2.6 h-1.4 l-.2-2.6 h-.8 l-.2 2.6 h-1.4 l-.4-2.6 h-1.6z" fill="#1f2b52"/><path d="M911.6 343.8 h.8 l.5 4 l-.9.8 l-.9-.8z" fill="#d8362c"/><path d="M908.8 344.4 l-2 1.6 M915.2 344.4 l2-1.4" stroke="#e8d0c0" stroke-width="0.8"/></g>
</g>
<rect x="852.9" y="314.3" width="74.8" height="42" fill="none" stroke="#e7e7e5" stroke-width="0.6"/>
<clipPath id="t15"><rect x="936.7" y="314.3" width="73.5" height="42"/></clipPath>
<g clip-path="url(#t15)">
<rect x="936.7" y="314.3" width="73.5" height="42" fill="#fbf8e3"/>
<g fill="#48a0e8"><path d="M953 317.2 l2-2.6 h4 l-2 2.6z M960 317.2 l2-2.6 h4 l-2 2.6z M967 317.2 l2-2.6 h4 l-2 2.6z M974 317.2 l2-2.6 h4 l-2 2.6z M981 317.2 l2-2.6 h4 l-2 2.6z"/></g><circle cx="991" cy="316" r="1.3" fill="#e6e6dc"/>
<text x="943.3" y="332.5" font-size="10.4" fill="#f3705b" textLength="63.2" lengthAdjust="spacingAndGlyphs" font-weight="bold">How to know</text>
<text x="942.3" y="339.7" font-size="5.4" fill="#f07866" textLength="36.6" lengthAdjust="spacingAndGlyphs">If a girl likes you</text>
<path d="M983 341 q2-2.4 4.6-.4 q.4 1.8-1.4 2.6 l2.8 1.8 l-1 .8 l-3-1.6 q-2.2-.6-2-3.2z" fill="#f0838a"/><circle cx="984.6" cy="341.6" r="0.9" fill="#f6c84a"/>
</g>
<clipPath id="t16"><rect x="770" y="364.3" width="74" height="40"/></clipPath>
<g clip-path="url(#t16)">
<rect x="770" y="364.3" width="74" height="40" fill="#f5d6e7"/>
<g><path d="M804 371.2 h11.4 l-1.6-2 h-8.2z" fill="#f0c22c"/><rect x="807" y="367" width="5.4" height="2.4" fill="#e8b020"/><path d="M805 375.6 l1.6-4.2 h6.2 l1.6 4.2z" fill="#28305e"/><circle cx="808" cy="373" r="1" fill="#e04040"/><circle cx="811.6" cy="373" r="1" fill="#e04040"/><rect x="808.6" y="373.6" width="2.4" height="2" fill="#f4f4f4"/><circle cx="803.6" cy="370.6" r="0.7" fill="#48b04a"/><circle cx="816" cy="370.6" r="0.7" fill="#48b04a"/></g>
<g fill="#f5e05a"><circle cx="786" cy="387.6" r="1.2"/><circle cx="777" cy="392" r="0.6"/><circle cx="797" cy="395" r="0.6"/></g><g fill="#9fd0e8"><circle cx="793" cy="372" r="0.5"/><circle cx="826" cy="385.4" r="0.6"/><circle cx="780" cy="375" r="0.5"/></g>
<text x="776" y="383.7" font-size="5.3" fill="#3d7fc0" textLength="45.8" lengthAdjust="spacingAndGlyphs"  stroke="#3d7fc0" stroke-width="0.21">How To Ask a Girl Out</text>
<text x="776.7" y="393.3" font-size="7.4" fill="#a99a38" textLength="53.1" lengthAdjust="spacingAndGlyphs">Asking her in person</text>
<circle cx="838.6" cy="393" r="3.4" fill="#5cb04a"/><circle cx="838.4" cy="388.8" r="1.8" fill="#efe6c8"/><circle cx="838.6" cy="393" r="1.2" fill="#23305a"/><circle cx="835.4" cy="395.4" r="0.7" fill="#f5e05a"/>
</g>
<clipPath id="t17"><rect x="852.9" y="364.3" width="74.8" height="40"/></clipPath>
<g clip-path="url(#t17)">
<rect x="852.9" y="364.3" width="74.8" height="40" fill="#dde3ea"/>
<path d="M901 373.6 Q903 368 909 366 Q908 371.6 902.4 373.2 Z" fill="#7cc242"/><path d="M901 373.6 L909 366" stroke="#a8d878" stroke-width="0.4"/>
<text x="870" y="383.5" font-size="6.2" fill="#555" textLength="43.2" lengthAdjust="spacingAndGlyphs">how to live free?</text>
<text x="871.3" y="393.6" font-size="10.4" fill="#9b8f3a" textLength="48.5" lengthAdjust="spacingAndGlyphs"  stroke="#9b8f3a" stroke-width="0.42">Worry Less</text>
<g><path d="M860.6 384.4 V393" stroke="#2a9aa8" stroke-width="1.3"/><path d="M858.4 386 L860.6 384" stroke="#2a9aa8" stroke-width="0.9"/><path d="M857.6 393.4 H863.6" stroke="#e89a4a" stroke-width="1.1"/><path d="M858 385.2 l2-1.2 v2z" fill="#e04848"/></g>
</g>
<clipPath id="t18"><rect x="936.3" y="364.3" width="74" height="40"/></clipPath>
<g clip-path="url(#t18)">
<rect x="936.3" y="364.3" width="74" height="40" fill="#d8f0f0"/>
<g><path d="M955 364.3 L958 372 M962 364.3 L958 372 L957.6 376" stroke="#c8a878" stroke-width="0.6" fill="none"/><ellipse cx="955" cy="369.6" rx="2.4" ry="4" fill="#72b82e" transform="rotate(20 955 369.6)"/><ellipse cx="964.6" cy="368" rx="2.6" ry="3.8" fill="#86c83a" transform="rotate(-10 964.6 368)"/><ellipse cx="958.6" cy="374.6" rx="2" ry="3.6" fill="#7cc034" transform="rotate(-15 958.6 374.6)"/><ellipse cx="948" cy="365.4" rx="2.4" ry="1.4" fill="#86c83a"/><ellipse cx="984.4" cy="367" rx="2.6" ry="2" fill="#5aa82a" transform="rotate(30 984.4 367)"/><ellipse cx="986.4" cy="369.6" rx="1" ry="2.2" fill="#72b82e" transform="rotate(-30 986.4 369.6)"/><circle cx="956.4" cy="373.4" r="0.5" fill="#223"/></g>
<text x="952" y="386.5" font-size="6.3" fill="#84bc32" textLength="45.9" lengthAdjust="spacingAndGlyphs">How To Be Healthy</text>
<text x="952" y="391.1" font-size="4.1" fill="#4aa830" textLength="33.2" lengthAdjust="spacingAndGlyphs"  stroke="#4aa830" stroke-width="0.16">Having a heart to diet</text>
<text x="952" y="396.6" font-size="4.1" fill="#a8d4d8" textLength="36" lengthAdjust="spacingAndGlyphs"  stroke="#a8d4d8" stroke-width="0.16">Healthy eating every day</text>
</g>
</g>
</g>
<rect x="0" y="397" width="1024" height="179" fill="#fff"/>
<g stroke="#555" fill="none" stroke-width="1"><rect x="8.3" y="409.6" width="8" height="7.6"/><line x1="8.3" y1="411.5" x2="16.3" y2="411.5"/><line x1="8.3" y1="415.3" x2="16.3" y2="415.3"/></g>
<g stroke="#555" stroke-width="0.8"><line x1="10.3" y1="409.6" x2="10.3" y2="411.5"/><line x1="12.3" y1="409.6" x2="12.3" y2="411.5"/><line x1="14.3" y1="409.6" x2="14.3" y2="411.5"/><line x1="10.3" y1="415.3" x2="10.3" y2="417.2"/><line x1="12.3" y1="415.3" x2="12.3" y2="417.2"/><line x1="14.3" y1="415.3" x2="14.3" y2="417.2"/></g>
<text x="19.1" y="416.3" font-size="8.6" fill="#555" textLength="45.7" lengthAdjust="spacingAndGlyphs" stroke="#555" stroke-width="0.24">Intro &amp; Outro</text>
<g><rect x="73.1" y="410.7" width="7" height="6.4" rx="0.8" fill="#1f6fd4"/><path d="M75 415.6 L78.2 412.2" stroke="#e8f1fc" stroke-width="0.6"/><circle cx="75.4" cy="412.8" r="0.6" fill="none" stroke="#e8f1fc" stroke-width="0.4"/><circle cx="77.8" cy="415" r="0.6" fill="none" stroke="#e8f1fc" stroke-width="0.4"/><path d="M75.4 408.4 V410 M77 408.4 V410 M78.6 408.4 V410 M80.2 408.4 V410 M81.2 408.8 V409.8 M81.2 410.6 V411.6 M81.2 412.4 V413.4 M81.2 414.2 V415.2" stroke="#1f6fd4" stroke-width="0.85"/></g>
<text x="84.6" y="416.3" font-size="8.6" fill="#2b7bd6" textLength="39.6" lengthAdjust="spacingAndGlyphs" stroke="#2b7bd6" stroke-width="0.24">Foreground</text>
<g fill="none" stroke="#2b7bd6" stroke-width="1.15"><circle cx="135.8" cy="410.9" r="1.45"/><circle cx="140.3" cy="410.9" r="1.45"/><circle cx="135.8" cy="415.4" r="1.45"/><circle cx="140.3" cy="415.4" r="1.45"/><rect x="137.1" y="412.2" width="1.9" height="1.9" stroke-width="0.95"/></g>
<text x="146.5" y="416.3" font-size="8.6" fill="#2b7bd6" textLength="37.1" lengthAdjust="spacingAndGlyphs" stroke="#2b7bd6" stroke-width="0.24">Decoration</text>
<g><circle cx="196.4" cy="413.4" r="4" fill="none" stroke="#2b7bd6" stroke-width="1.4"/><circle cx="194.8" cy="412.3" r="0.8" fill="#2b7bd6"/><circle cx="198" cy="412.3" r="0.8" fill="#2b7bd6"/><path d="M194.2 414.3 Q196.4 416.8 198.6 414.3 Z" fill="#2b7bd6"/></g>
<text x="203.9" y="416.3" font-size="8.6" fill="#2b7bd6" textLength="26.6" lengthAdjust="spacingAndGlyphs" stroke="#2b7bd6" stroke-width="0.24">Stickers</text>
<g fill="none" stroke="#2b7bd6" stroke-width="0.9"><path d="M239 412.2 H240.6 L242.6 410.4 V416.4 L240.6 414.6 H239 Z"/><path d="M244 412.2 L246.3 414.6 M246.3 412.2 L244 414.6"/></g>
<text x="250" y="416.3" font-size="8.6" fill="#2b7bd6" textLength="17" lengthAdjust="spacingAndGlyphs" stroke="#2b7bd6" stroke-width="0.24">Mute</text>
<g><rect x="278.1" y="409.2" width="3" height="5.6" rx="1.5" fill="#555"/><path d="M276.4 412.6 V413.4 A3.2 3.2 0 0 0 282.8 413.4 V412.6" fill="none" stroke="#555" stroke-width="0.9"/><path d="M279.6 416.4 V417.8 M277.9 417.8 H281.3" stroke="#555" stroke-width="0.9"/></g>
<text x="286" y="416.3" font-size="8.6" fill="#555" textLength="23" lengthAdjust="spacingAndGlyphs" stroke="#555" stroke-width="0.24">Record</text>
<g fill="none" stroke="#555" stroke-width="0.9"><path d="M319.8 411.2 H322 L322.9 409.8 H326.1 L327 411.2 H329.2 V417.3 H319.8 Z"/><circle cx="324.5" cy="414" r="2"/></g>
<text x="332.5" y="416.3" font-size="8.6" fill="#6f7d8f" textLength="36.5" lengthAdjust="spacingAndGlyphs" stroke="#6f7d8f" stroke-width="0.24">Screenshot</text>
<g fill="none" stroke="#555" stroke-width="1.35"><circle cx="421.2" cy="413" r="7.8"/><circle cx="448.3" cy="413" r="9.4"/><circle cx="474.9" cy="413" r="7.8"/><circle cx="501.7" cy="413" r="8"/></g>
<path d="M418.2 409.9 V416.1" stroke="#555" stroke-width="1.7"/><path d="M424.8 409.7 V416.3 L419.3 413 Z" fill="#555"/>
<path d="M444.6 408.3 V417.7 L453.3 413 Z" fill="#555" stroke="#555" stroke-width="0.6" stroke-linejoin="round"/>
<path d="M477.9 409.9 V416.1" stroke="#555" stroke-width="1.7"/><path d="M471.3 409.7 V416.3 L476.8 413 Z" fill="#555"/>
<path d="M498.7 410.3 A4.3 4.3 0 1 1 497.5 413.8" fill="none" stroke="#555" stroke-width="1.5"/><path d="M496.9 408.4 L497.3 412.3 L501.1 411.2 Z" fill="#555"/>
<text x="519.7" y="416.3" font-size="8.6" fill="#555" textLength="64.9" lengthAdjust="spacingAndGlyphs" stroke="#555" stroke-width="0.24">Preview Resolution</text>
<rect x="587.4" y="405.4" width="55.3" height="15" fill="#fff" stroke="#d3dae6" stroke-width="0.8"/>
<rect x="628.2" y="405.8" width="14.1" height="14.2" fill="#e9edf3"/>
<line x1="628.2" y1="405.4" x2="628.2" y2="420.4" stroke="#d3dae6" stroke-width="0.8" />
<path d="M633 411.2 H638.4 L635.7 414.2 Z" fill="#444"/>
<text x="591.3" y="417" font-size="8.6" fill="#444" textLength="11.2" lengthAdjust="spacingAndGlyphs" stroke="#444" stroke-width="0.24">1/2</text>
<g fill="none" stroke="#666" stroke-width="0.8" stroke-linejoin="round"><path d="M654.8 408.9 L659.2 411 L654.8 413.1 L650.4 411 Z"/><path d="M650.4 413 L654.8 415.1 L659.2 413"/><path d="M650.4 415 L654.8 417.1 L659.2 415"/></g>
<text x="781.9" y="417.1" font-size="10.9" fill="#2d8cf0" textLength="49.4" lengthAdjust="spacingAndGlyphs" font-weight="bold" class="sf">00:00:13.12</text>
<text x="835" y="417.1" font-size="10.9" fill="#2d8cf0" font-weight="bold" class="sf">/</text>
<text x="842.4" y="417.1" font-size="10.9" fill="#8a8a8a" textLength="49.6" lengthAdjust="spacingAndGlyphs" class="sf">00:00:15.50</text>
<line x1="842.4" y1="418.6" x2="892" y2="418.6" stroke="#8a8a8a" stroke-width="0.7" />
<line x1="897" y1="413" x2="904" y2="413" stroke="#777" stroke-width="1.1" />
<line x1="909.7" y1="413" x2="916.4" y2="413" stroke="#777" stroke-width="1.1" />
<line x1="913.05" y1="409.6" x2="913.05" y2="416.4" stroke="#777" stroke-width="1.1" />
<g fill="none" stroke="#888" stroke-width="0.8"><circle cx="938.2" cy="412.4" r="3.5"/><path d="M936.5 412.4 H939.9 M940.8 415 L942.8 417"/><circle cx="1008.4" cy="412.4" r="3.5"/><path d="M1006.7 412.4 H1010.1 M1008.4 410.7 V414.1 M1011 415 L1013 417"/></g>
<line x1="952" y1="413" x2="1000.2" y2="413" stroke="#cfcfcf" stroke-width="1" />
<circle cx="948.6" cy="413" r="3.1" fill="#fff" stroke="#444" stroke-width="1.2"/>
<line x1="0" y1="428.5" x2="1024" y2="428.5" stroke="#e4e4e4" stroke-width="1" />
<rect x="103" y="444.2" width="857" height="7.3" fill="#e4e4e4"/>
<line x1="102.7" y1="437.4" x2="102.7" y2="443.6" stroke="#cfcfcf" stroke-width="0.8" />
<line x1="113.8" y1="440" x2="113.8" y2="443.6" stroke="#d6d6d6" stroke-width="0.8" />
<line x1="124.8" y1="440" x2="124.8" y2="443.6" stroke="#d6d6d6" stroke-width="0.8" />
<line x1="135.9" y1="440" x2="135.9" y2="443.6" stroke="#d6d6d6" stroke-width="0.8" />
<line x1="146.9" y1="440" x2="146.9" y2="443.6" stroke="#d6d6d6" stroke-width="0.8" />
<line x1="158.0" y1="437.4" x2="158.0" y2="443.6" stroke="#cfcfcf" stroke-width="0.8" />
<line x1="169.1" y1="440" x2="169.1" y2="443.6" stroke="#d6d6d6" stroke-width="0.8" />
<line x1="180.1" y1="440" x2="180.1" y2="443.6" stroke="#d6d6d6" stroke-width="0.8" />
<line x1="191.2" y1="440" x2="191.2" y2="443.6" stroke="#d6d6d6" stroke-width="0.8" />
<line x1="202.2" y1="440" x2="202.2" y2="443.6" stroke="#d6d6d6" stroke-width="0.8" />
<line x1="213.3" y1="437.4" x2="213.3" y2="443.6" stroke="#cfcfcf" stroke-width="0.8" />
<line x1="224.4" y1="440" x2="224.4" y2="443.6" stroke="#d6d6d6" stroke-width="0.8" />
<line x1="235.4" y1="440" x2="235.4" y2="443.6" stroke="#d6d6d6" stroke-width="0.8" />
<line x1="246.5" y1="440" x2="246.5" y2="443.6" stroke="#d6d6d6" stroke-width="0.8" />
<line x1="257.5" y1="440" x2="257.5" y2="443.6" stroke="#d6d6d6" stroke-width="0.8" />
<line x1="268.6" y1="437.4" x2="268.6" y2="443.6" stroke="#cfcfcf" stroke-width="0.8" />
<line x1="279.7" y1="440" x2="279.7" y2="443.6" stroke="#d6d6d6" stroke-width="0.8" />
<line x1="290.7" y1="440" x2="290.7" y2="443.6" stroke="#d6d6d6" stroke-width="0.8" />
<line x1="301.8" y1="440" x2="301.8" y2="443.6" stroke="#d6d6d6" stroke-width="0.8" />
<line x1="312.8" y1="440" x2="312.8" y2="443.6" stroke="#d6d6d6" stroke-width="0.8" />
<line x1="323.9" y1="437.4" x2="323.9" y2="443.6" stroke="#cfcfcf" stroke-width="0.8" />
<line x1="335.0" y1="440" x2="335.0" y2="443.6" stroke="#d6d6d6" stroke-width="0.8" />
<line x1="346.0" y1="440" x2="346.0" y2="443.6" stroke="#d6d6d6" stroke-width="0.8" />
<line x1="357.1" y1="440" x2="357.1" y2="443.6" stroke="#d6d6d6" stroke-width="0.8" />
<line x1="368.1" y1="440" x2="368.1" y2="443.6" stroke="#d6d6d6" stroke-width="0.8" />
<line x1="379.2" y1="437.4" x2="379.2" y2="443.6" stroke="#cfcfcf" stroke-width="0.8" />
<line x1="390.3" y1="440" x2="390.3" y2="443.6" stroke="#d6d6d6" stroke-width="0.8" />
<line x1="401.3" y1="440" x2="401.3" y2="443.6" stroke="#d6d6d6" stroke-width="0.8" />
<line x1="412.4" y1="440" x2="412.4" y2="443.6" stroke="#d6d6d6" stroke-width="0.8" />
<line x1="423.4" y1="440" x2="423.4" y2="443.6" stroke="#d6d6d6" stroke-width="0.8" />
<line x1="434.5" y1="437.4" x2="434.5" y2="443.6" stroke="#cfcfcf" stroke-width="0.8" />
<line x1="445.6" y1="440" x2="445.6" y2="443.6" stroke="#d6d6d6" stroke-width="0.8" />
<line x1="456.6" y1="440" x2="456.6" y2="443.6" stroke="#d6d6d6" stroke-width="0.8" />
<line x1="467.7" y1="440" x2="467.7" y2="443.6" stroke="#d6d6d6" stroke-width="0.8" />
<line x1="478.7" y1="440" x2="478.7" y2="443.6" stroke="#d6d6d6" stroke-width="0.8" />
<line x1="489.8" y1="437.4" x2="489.8" y2="443.6" stroke="#cfcfcf" stroke-width="0.8" />
<line x1="500.9" y1="440" x2="500.9" y2="443.6" stroke="#d6d6d6" stroke-width="0.8" />
<line x1="511.9" y1="440" x2="511.9" y2="443.6" stroke="#d6d6d6" stroke-width="0.8" />
<line x1="523.0" y1="440" x2="523.0" y2="443.6" stroke="#d6d6d6" stroke-width="0.8" />
<line x1="534.0" y1="440" x2="534.0" y2="443.6" stroke="#d6d6d6" stroke-width="0.8" />
<line x1="545.1" y1="437.4" x2="545.1" y2="443.6" stroke="#cfcfcf" stroke-width="0.8" />
<line x1="556.2" y1="440" x2="556.2" y2="443.6" stroke="#d6d6d6" stroke-width="0.8" />
<line x1="567.2" y1="440" x2="567.2" y2="443.6" stroke="#d6d6d6" stroke-width="0.8" />
<line x1="578.3" y1="440" x2="578.3" y2="443.6" stroke="#d6d6d6" stroke-width="0.8" />
<line x1="589.3" y1="440" x2="589.3" y2="443.6" stroke="#d6d6d6" stroke-width="0.8" />
<line x1="600.4" y1="437.4" x2="600.4" y2="443.6" stroke="#cfcfcf" stroke-width="0.8" />
<line x1="611.5" y1="440" x2="611.5" y2="443.6" stroke="#d6d6d6" stroke-width="0.8" />
<line x1="622.5" y1="440" x2="622.5" y2="443.6" stroke="#d6d6d6" stroke-width="0.8" />
<line x1="633.6" y1="440" x2="633.6" y2="443.6" stroke="#d6d6d6" stroke-width="0.8" />
<line x1="644.6" y1="440" x2="644.6" y2="443.6" stroke="#d6d6d6" stroke-width="0.8" />
<line x1="655.7" y1="437.4" x2="655.7" y2="443.6" stroke="#cfcfcf" stroke-width="0.8" />
<line x1="666.8" y1="440" x2="666.8" y2="443.6" stroke="#d6d6d6" stroke-width="0.8" />
<line x1="677.8" y1="440" x2="677.8" y2="443.6" stroke="#d6d6d6" stroke-width="0.8" />
<line x1="688.9" y1="440" x2="688.9" y2="443.6" stroke="#d6d6d6" stroke-width="0.8" />
<line x1="699.9" y1="440" x2="699.9" y2="443.6" stroke="#d6d6d6" stroke-width="0.8" />
<line x1="711.0" y1="437.4" x2="711.0" y2="443.6" stroke="#cfcfcf" stroke-width="0.8" />
<line x1="722.1" y1="440" x2="722.1" y2="443.6" stroke="#d6d6d6" stroke-width="0.8" />
<line x1="733.1" y1="440" x2="733.1" y2="443.6" stroke="#d6d6d6" stroke-width="0.8" />
<line x1="744.2" y1="440" x2="744.2" y2="443.6" stroke="#d6d6d6" stroke-width="0.8" />
<line x1="755.2" y1="440" x2="755.2" y2="443.6" stroke="#d6d6d6" stroke-width="0.8" />
<line x1="766.3" y1="437.4" x2="766.3" y2="443.6" stroke="#cfcfcf" stroke-width="0.8" />
<line x1="777.4" y1="440" x2="777.4" y2="443.6" stroke="#d6d6d6" stroke-width="0.8" />
<line x1="788.4" y1="440" x2="788.4" y2="443.6" stroke="#d6d6d6" stroke-width="0.8" />
<line x1="799.5" y1="440" x2="799.5" y2="443.6" stroke="#d6d6d6" stroke-width="0.8" />
<line x1="810.5" y1="440" x2="810.5" y2="443.6" stroke="#d6d6d6" stroke-width="0.8" />
<line x1="821.6" y1="437.4" x2="821.6" y2="443.6" stroke="#cfcfcf" stroke-width="0.8" />
<line x1="832.7" y1="440" x2="832.7" y2="443.6" stroke="#d6d6d6" stroke-width="0.8" />
<line x1="843.7" y1="440" x2="843.7" y2="443.6" stroke="#d6d6d6" stroke-width="0.8" />
<line x1="854.8" y1="440" x2="854.8" y2="443.6" stroke="#d6d6d6" stroke-width="0.8" />
<line x1="865.8" y1="440" x2="865.8" y2="443.6" stroke="#d6d6d6" stroke-width="0.8" />
<line x1="876.9" y1="437.4" x2="876.9" y2="443.6" stroke="#cfcfcf" stroke-width="0.8" />
<line x1="888.0" y1="440" x2="888.0" y2="443.6" stroke="#d6d6d6" stroke-width="0.8" />
<line x1="899.0" y1="440" x2="899.0" y2="443.6" stroke="#d6d6d6" stroke-width="0.8" />
<line x1="910.1" y1="440" x2="910.1" y2="443.6" stroke="#d6d6d6" stroke-width="0.8" />
<line x1="921.1" y1="440" x2="921.1" y2="443.6" stroke="#d6d6d6" stroke-width="0.8" />
<line x1="932.2" y1="437.4" x2="932.2" y2="443.6" stroke="#cfcfcf" stroke-width="0.8" />
<line x1="943.3" y1="440" x2="943.3" y2="443.6" stroke="#d6d6d6" stroke-width="0.8" />
<line x1="954.3" y1="440" x2="954.3" y2="443.6" stroke="#d6d6d6" stroke-width="0.8" />
<text x="105.4" y="437" font-size="8.3" fill="#999" class="sf">0s</text>
<text x="158.0" y="437" font-size="8.3" fill="#999" text-anchor="middle" class="sf">1s</text>
<text x="213.3" y="437" font-size="8.3" fill="#999" text-anchor="middle" class="sf">2s</text>
<text x="268.6" y="437" font-size="8.3" fill="#999" text-anchor="middle" class="sf">3s</text>
<text x="323.9" y="437" font-size="8.3" fill="#999" text-anchor="middle" class="sf">4s</text>
<text x="379.2" y="437" font-size="8.3" fill="#999" text-anchor="middle" class="sf">5s</text>
<text x="434.5" y="437" font-size="8.3" fill="#999" text-anchor="middle" class="sf">6s</text>
<text x="489.8" y="437" font-size="8.3" fill="#999" text-anchor="middle" class="sf">7s</text>
<text x="545.1" y="437" font-size="8.3" fill="#999" text-anchor="middle" class="sf">8s</text>
<text x="600.4" y="437" font-size="8.3" fill="#999" text-anchor="middle" class="sf">9s</text>
<text x="655.7" y="437" font-size="8.3" fill="#999" text-anchor="middle" class="sf">10s</text>
<text x="711.0" y="437" font-size="8.3" fill="#999" text-anchor="middle" class="sf">11s</text>
<text x="766.3" y="437" font-size="8.3" fill="#999" text-anchor="middle" class="sf">12s</text>
<text x="821.6" y="437" font-size="8.3" fill="#999" text-anchor="middle" class="sf">13s</text>
<text x="876.9" y="437" font-size="8.3" fill="#999" text-anchor="middle" class="sf">14s</text>
<text x="932.2" y="437" font-size="8.3" fill="#999" text-anchor="middle" class="sf">15s</text>
<text x="942.6" y="437" font-size="8.3" fill="#999" textLength="16" lengthAdjust="spacingAndGlyphs" class="sf">15.5s</text>
<rect x="103" y="452" width="853" height="114.4" fill="#f4f4f4"/>
<line x1="0" y1="451.5" x2="1024" y2="451.5" stroke="#e3e3e3" stroke-width="1" />
<line x1="0" y1="489.5" x2="1024" y2="489.5" stroke="#e3e3e3" stroke-width="1" />
<line x1="0" y1="509" x2="1024" y2="509" stroke="#e3e3e3" stroke-width="1" />
<line x1="0" y1="528.5" x2="1024" y2="528.5" stroke="#e3e3e3" stroke-width="1" />
<line x1="0" y1="547.5" x2="1024" y2="547.5" stroke="#e3e3e3" stroke-width="1" />
<line x1="0" y1="566.4" x2="1024" y2="566.4" stroke="#e3e3e3" stroke-width="1" />
<line x1="102.6" y1="428.5" x2="102.6" y2="576" stroke="#dcdcdc" stroke-width="1" />
<line x1="960.2" y1="428.5" x2="960.2" y2="576" stroke="#e0e0e0" stroke-width="1" />
<rect x="960.7" y="452" width="63.3" height="114" fill="#fff"/>
<line x1="960.7" y1="451.5" x2="1024" y2="451.5" stroke="#e3e3e3" stroke-width="1" />
<line x1="960.7" y1="489.5" x2="1024" y2="489.5" stroke="#e3e3e3" stroke-width="1" />
<line x1="960.7" y1="509" x2="1024" y2="509" stroke="#e3e3e3" stroke-width="1" />
<line x1="960.7" y1="528.5" x2="1024" y2="528.5" stroke="#e3e3e3" stroke-width="1" />
<line x1="960.7" y1="547.5" x2="1024" y2="547.5" stroke="#e3e3e3" stroke-width="1" />
<line x1="960.7" y1="566.4" x2="1024" y2="566.4" stroke="#e3e3e3" stroke-width="1" />
<rect x="103" y="566.9" width="857" height="10" fill="#fff"/>
<rect x="102.6" y="444.2" width="4" height="7.2" fill="#2d8cf0" rx="0.8"/>
<rect x="104" y="446.3" width="1.2" height="3" fill="#cfe3fb"/>
<rect x="955.9" y="444.2" width="3.8" height="7.2" fill="#2d8cf0" rx="0.8"/>
<rect x="957.2" y="446.3" width="1.2" height="3" fill="#cfe3fb"/>
<rect x="956.2" y="454" width="3.5" height="89" fill="#bdbdbd" rx="1.7"/>
<rect x="4.6" y="465.8" width="9.6" height="9.8" rx="0.6" fill="none" stroke="#555" stroke-width="1.25"/>
<text x="9.4" y="473.7" font-size="8.6" fill="#555" text-anchor="middle" font-weight="bold" class="sf">T</text>
<text x="20.7" y="473.8" font-size="8.6" fill="#555" textLength="37.5" lengthAdjust="spacingAndGlyphs" stroke="#555" stroke-width="0.24">Rotate Text</text>
<circle cx="89.8" cy="470.6" r="3.5" fill="none" stroke="#777" stroke-width="0.75"/>
<text x="89.8" y="472.9" font-size="6.4" fill="#666" text-anchor="middle" font-weight="bold">?</text>
<g><rect x="4.6" y="494.5" width="9.6" height="9.7" fill="none" stroke="#555" stroke-width="1.2"/><path d="M5.2 499 L9.4 494.9 M5.2 502.6 L13.6 494.9 M6.6 503.8 L13.8 497 M10 503.8 L13.8 500.4" stroke="#555" stroke-width="1.15"/></g>
<text x="20.7" y="502.8" font-size="8.6" fill="#555" textLength="40.5" lengthAdjust="spacingAndGlyphs" stroke="#555" stroke-width="0.24">Background</text>
<g><rect x="4.5" y="515.6" width="8" height="7.6" fill="none" stroke="#555" stroke-width="1.1"/><path d="M5 520 L9 516 M5 523 L12 516 M7.6 523 L12.2 518.4 M10.4 523 L12.2 521.2" stroke="#555" stroke-width="1"/><path d="M4.4 513.6 H14.4 M14.5 513.2 V523.4" stroke="#555" stroke-width="0.9" stroke-dasharray="1.1 0.8" fill="none"/></g>
<text x="20.7" y="521.9" font-size="8.6" fill="#555" textLength="39.5" lengthAdjust="spacingAndGlyphs" stroke="#555" stroke-width="0.24">Foreground</text>
<g stroke="#7d7d7d" fill="none"><path d="M3.8 534.3 H10" stroke-width="1"/><path d="M2.8 536.8 V539.8 M4.6 536.2 V540.4 M8.9 536.2 V540.4 M10.8 536.8 V539.8" stroke-width="1"/><path d="M6.8 533.6 V543.2" stroke-width="1.7"/></g>
<text x="15.3" y="541.1" font-size="8.6" fill="#555" textLength="21.5" lengthAdjust="spacingAndGlyphs" stroke="#555" stroke-width="0.24">Sound</text>
<g fill="none" stroke="#888" stroke-width="0.7"><path d="M93 536.6 H94.6 L96.4 534.9 V540.9 L94.6 539.2 H93 Z"/><path d="M97.6 536 Q98.9 537.9 97.6 539.8"/></g>
<g><circle cx="8.8" cy="556.7" r="4.6" fill="none" stroke="#555" stroke-width="1.05"/><circle cx="7.1" cy="555.4" r="0.75" fill="#555"/><circle cx="10.5" cy="555.4" r="0.75" fill="#555"/><path d="M6.3 557.8 Q8.8 560.6 11.3 557.8" fill="none" stroke="#555" stroke-width="0.9"/></g>
<text x="20.7" y="560.2" font-size="8.6" fill="#555" textLength="50" lengthAdjust="spacingAndGlyphs" stroke="#555" stroke-width="0.24">Enterprise Staff</text>
<rect x="105" y="454.2" width="30.5" height="32.1" fill="#fff" stroke="#e2e2e2" stroke-width="0.8"/>
<text x="120.2" y="474.2" font-size="12.6" fill="#111" text-anchor="middle" class="sf">T</text>
<rect x="123.3" y="454.2" width="12.2" height="12.3" fill="#fff" stroke="#e2e2e2" stroke-width="0.8"/>
<g fill="none" stroke="#a6a6a6" stroke-width="0.8" stroke-linejoin="round"><path d="M126.1 458.8 H127.9 L130.6 457.0 V463.4 L127.9 461.6 H126.1 Z"/><path d="M131.9 458.0 Q133.7 460.2 131.9 462.4"/></g>
<rect x="111.2" y="454.2" width="12.1" height="12.3" fill="#fff" stroke="#e2e2e2" stroke-width="0.8"/>
<g fill="none" stroke="#2e2e2e" stroke-linejoin="round"><path d="M114.6 458.1 L116.3 457.4 L118.5 457.9 L118.8 460.2 L117.3 461.7 L115.0 461.3 Z" stroke-width="0.85"/><path d="M118.1 461.3 L120.3 463.2" stroke-width="1.25"/><path d="M117.8 456.6 L118.2 457.4 M113.7 459.4 L114.5 459.6" stroke-width="0.6"/></g>
<rect x="141.2" y="454.2" width="39.2" height="32.1" fill="#fff" stroke="#e2e2e2" stroke-width="0.8"/>
<text x="160.8" y="474.2" font-size="12.6" fill="#111" text-anchor="middle" class="sf">T</text>
<rect x="168.2" y="454.2" width="12.2" height="12.3" fill="#fff" stroke="#e2e2e2" stroke-width="0.8"/>
<g fill="none" stroke="#a6a6a6" stroke-width="0.8" stroke-linejoin="round"><path d="M171.0 458.8 H172.8 L175.5 457.0 V463.4 L172.8 461.6 H171.0 Z"/><path d="M176.8 458.0 Q178.6 460.2 176.8 462.4"/></g>
<rect x="217.6" y="454.2" width="39.0" height="32.1" fill="#fff" stroke="#e2e2e2" stroke-width="0.8"/>
<text x="237.1" y="474.2" font-size="12.6" fill="#111" text-anchor="middle" class="sf">T</text>
<rect x="244.4" y="454.2" width="12.2" height="12.3" fill="#fff" stroke="#e2e2e2" stroke-width="0.8"/>
<g fill="none" stroke="#a6a6a6" stroke-width="0.8" stroke-linejoin="round"><path d="M247.2 458.8 H249.0 L251.7 457.0 V463.4 L249.0 461.6 H247.2 Z"/><path d="M253.0 458.0 Q254.8 460.2 253.0 462.4"/></g>
<rect x="232.3" y="454.2" width="12.1" height="12.3" fill="#fff" stroke="#e2e2e2" stroke-width="0.8"/>
<g fill="none" stroke="#2e2e2e" stroke-linejoin="round"><path d="M235.7 458.1 L237.4 457.4 L239.6 457.9 L239.9 460.2 L238.4 461.7 L236.1 461.3 Z" stroke-width="0.85"/><path d="M239.2 461.3 L241.4 463.2" stroke-width="1.25"/><path d="M238.9 456.6 L239.3 457.4 M234.8 459.4 L235.6 459.6" stroke-width="0.6"/></g>
<rect x="287.6" y="454.2" width="33.0" height="32.1" fill="#fff" stroke="#e2e2e2" stroke-width="0.8"/>
<text x="304.1" y="474.2" font-size="12.6" fill="#111" text-anchor="middle" class="sf">T</text>
<rect x="308.4" y="454.2" width="12.2" height="12.3" fill="#fff" stroke="#e2e2e2" stroke-width="0.8"/>
<g fill="none" stroke="#a6a6a6" stroke-width="0.8" stroke-linejoin="round"><path d="M311.2 458.8 H313.0 L315.7 457.0 V463.4 L313.0 461.6 H311.2 Z"/><path d="M317.0 458.0 Q318.8 460.2 317.0 462.4"/></g>
<rect x="326" y="454.2" width="33.6" height="32.1" fill="#fff" stroke="#e2e2e2" stroke-width="0.8"/>
<text x="342.8" y="474.2" font-size="12.6" fill="#111" text-anchor="middle" class="sf">T</text>
<rect x="347.4" y="454.2" width="12.2" height="12.3" fill="#fff" stroke="#e2e2e2" stroke-width="0.8"/>
<g fill="none" stroke="#a6a6a6" stroke-width="0.8" stroke-linejoin="round"><path d="M350.2 458.8 H352.0 L354.7 457.0 V463.4 L352.0 461.6 H350.2 Z"/><path d="M356.0 458.0 Q357.8 460.2 356.0 462.4"/></g>
<rect x="335.3" y="454.2" width="12.1" height="12.3" fill="#fff" stroke="#e2e2e2" stroke-width="0.8"/>
<g fill="none" stroke="#2e2e2e" stroke-linejoin="round"><path d="M338.7 458.1 L340.4 457.4 L342.6 457.9 L342.9 460.2 L341.4 461.7 L339.1 461.3 Z" stroke-width="0.85"/><path d="M342.2 461.3 L344.4 463.2" stroke-width="1.25"/><path d="M341.9 456.6 L342.3 457.4 M337.8 459.4 L338.6 459.6" stroke-width="0.6"/></g>
<rect x="365" y="454.2" width="33" height="32.1" fill="#fff" stroke="#e2e2e2" stroke-width="0.8"/>
<text x="381.5" y="474.2" font-size="12.6" fill="#111" text-anchor="middle" class="sf">T</text>
<rect x="385.8" y="454.2" width="12.2" height="12.3" fill="#fff" stroke="#e2e2e2" stroke-width="0.8"/>
<g fill="none" stroke="#a6a6a6" stroke-width="0.8" stroke-linejoin="round"><path d="M388.6 458.8 H390.4 L393.1 457.0 V463.4 L390.4 461.6 H388.6 Z"/><path d="M394.4 458.0 Q396.2 460.2 394.4 462.4"/></g>
<rect x="373.7" y="454.2" width="12.1" height="12.3" fill="#fff" stroke="#e2e2e2" stroke-width="0.8"/>
<g fill="none" stroke="#2e2e2e" stroke-linejoin="round"><path d="M377.1 458.1 L378.8 457.4 L381.0 457.9 L381.3 460.2 L379.8 461.7 L377.5 461.3 Z" stroke-width="0.85"/><path d="M380.6 461.3 L382.8 463.2" stroke-width="1.25"/><path d="M380.3 456.6 L380.7 457.4 M376.2 459.4 L377.0 459.6" stroke-width="0.6"/></g>
<rect x="430.2" y="454.2" width="33.1" height="32.1" fill="#fff" stroke="#e2e2e2" stroke-width="0.8"/>
<text x="446.8" y="474.2" font-size="12.6" fill="#111" text-anchor="middle" class="sf">T</text>
<rect x="451.1" y="454.2" width="12.2" height="12.3" fill="#fff" stroke="#e2e2e2" stroke-width="0.8"/>
<g fill="none" stroke="#a6a6a6" stroke-width="0.8" stroke-linejoin="round"><path d="M453.9 458.8 H455.7 L458.4 457.0 V463.4 L455.7 461.6 H453.9 Z"/><path d="M459.7 458.0 Q461.5 460.2 459.7 462.4"/></g>
<rect x="439.0" y="454.2" width="12.1" height="12.3" fill="#fff" stroke="#e2e2e2" stroke-width="0.8"/>
<g fill="none" stroke="#2e2e2e" stroke-linejoin="round"><path d="M442.4 458.1 L444.1 457.4 L446.3 457.9 L446.6 460.2 L445.1 461.7 L442.8 461.3 Z" stroke-width="0.85"/><path d="M445.9 461.3 L448.1 463.2" stroke-width="1.25"/><path d="M445.6 456.6 L446.0 457.4 M441.5 459.4 L442.3 459.6" stroke-width="0.6"/></g>
<rect x="468.3" y="454.2" width="33.7" height="32.1" fill="#fff" stroke="#e2e2e2" stroke-width="0.8"/>
<text x="485.1" y="474.2" font-size="12.6" fill="#111" text-anchor="middle" class="sf">T</text>
<rect x="489.8" y="454.2" width="12.2" height="12.3" fill="#fff" stroke="#e2e2e2" stroke-width="0.8"/>
<g fill="none" stroke="#a6a6a6" stroke-width="0.8" stroke-linejoin="round"><path d="M492.6 458.8 H494.4 L497.1 457.0 V463.4 L494.4 461.6 H492.6 Z"/><path d="M498.4 458.0 Q500.2 460.2 498.4 462.4"/></g>
<rect x="477.7" y="454.2" width="12.1" height="12.3" fill="#fff" stroke="#e2e2e2" stroke-width="0.8"/>
<g fill="none" stroke="#2e2e2e" stroke-linejoin="round"><path d="M481.1 458.1 L482.8 457.4 L485.0 457.9 L485.3 460.2 L483.8 461.7 L481.5 461.3 Z" stroke-width="0.85"/><path d="M484.6 461.3 L486.8 463.2" stroke-width="1.25"/><path d="M484.3 456.6 L484.7 457.4 M480.2 459.4 L481.0 459.6" stroke-width="0.6"/></g>
<rect x="507.6" y="454.2" width="33.2" height="32.1" fill="#fff" stroke="#e2e2e2" stroke-width="0.8"/>
<text x="524.2" y="474.2" font-size="12.6" fill="#111" text-anchor="middle" class="sf">T</text>
<rect x="528.6" y="454.2" width="12.2" height="12.3" fill="#fff" stroke="#e2e2e2" stroke-width="0.8"/>
<g fill="none" stroke="#a6a6a6" stroke-width="0.8" stroke-linejoin="round"><path d="M531.4 458.8 H533.2 L535.9 457.0 V463.4 L533.2 461.6 H531.4 Z"/><path d="M537.2 458.0 Q539.0 460.2 537.2 462.4"/></g>
<rect x="516.5" y="454.2" width="12.1" height="12.3" fill="#fff" stroke="#e2e2e2" stroke-width="0.8"/>
<g fill="none" stroke="#2e2e2e" stroke-linejoin="round"><path d="M519.9 458.1 L521.6 457.4 L523.8 457.9 L524.1 460.2 L522.6 461.7 L520.3 461.3 Z" stroke-width="0.85"/><path d="M523.4 461.3 L525.6 463.2" stroke-width="1.25"/><path d="M523.1 456.6 L523.5 457.4 M519.0 459.4 L519.8 459.6" stroke-width="0.6"/></g>
<rect x="546.2" y="454.2" width="33.6" height="32.1" fill="#fff" stroke="#e2e2e2" stroke-width="0.8"/>
<text x="563.0" y="474.2" font-size="12.6" fill="#111" text-anchor="middle" class="sf">T</text>
<rect x="567.6" y="454.2" width="12.2" height="12.3" fill="#fff" stroke="#e2e2e2" stroke-width="0.8"/>
<g fill="none" stroke="#a6a6a6" stroke-width="0.8" stroke-linejoin="round"><path d="M570.4 458.8 H572.2 L574.9 457.0 V463.4 L572.2 461.6 H570.4 Z"/><path d="M576.2 458.0 Q578.0 460.2 576.2 462.4"/></g>
<rect x="555.5" y="454.2" width="12.1" height="12.3" fill="#fff" stroke="#e2e2e2" stroke-width="0.8"/>
<g fill="none" stroke="#2e2e2e" stroke-linejoin="round"><path d="M558.9 458.1 L560.6 457.4 L562.8 457.9 L563.1 460.2 L561.6 461.7 L559.3 461.3 Z" stroke-width="0.85"/><path d="M562.4 461.3 L564.6 463.2" stroke-width="1.25"/><path d="M562.1 456.6 L562.5 457.4 M558.0 459.4 L558.8 459.6" stroke-width="0.6"/></g>
<rect x="622.4" y="454.2" width="33.3" height="32.1" fill="#fff" stroke="#e2e2e2" stroke-width="0.8"/>
<text x="639.0" y="474.2" font-size="12.6" fill="#111" text-anchor="middle" class="sf">T</text>
<rect x="643.5" y="454.2" width="12.2" height="12.3" fill="#fff" stroke="#e2e2e2" stroke-width="0.8"/>
<g fill="none" stroke="#a6a6a6" stroke-width="0.8" stroke-linejoin="round"><path d="M646.3 458.8 H648.1 L650.8 457.0 V463.4 L648.1 461.6 H646.3 Z"/><path d="M652.1 458.0 Q653.9 460.2 652.1 462.4"/></g>
<rect x="631.4" y="454.2" width="12.1" height="12.3" fill="#fff" stroke="#e2e2e2" stroke-width="0.8"/>
<g fill="none" stroke="#2e2e2e" stroke-linejoin="round"><path d="M634.8 458.1 L636.5 457.4 L638.7 457.9 L639.0 460.2 L637.5 461.7 L635.2 461.3 Z" stroke-width="0.85"/><path d="M638.3 461.3 L640.5 463.2" stroke-width="1.25"/><path d="M638.0 456.6 L638.4 457.4 M633.9 459.4 L634.7 459.6" stroke-width="0.6"/></g>
<rect x="660.6" y="454.2" width="33.7" height="32.1" fill="#fff" stroke="#e2e2e2" stroke-width="0.8"/>
<text x="677.5" y="474.2" font-size="12.6" fill="#111" text-anchor="middle" class="sf">T</text>
<rect x="682.1" y="454.2" width="12.2" height="12.3" fill="#fff" stroke="#e2e2e2" stroke-width="0.8"/>
<g fill="none" stroke="#a6a6a6" stroke-width="0.8" stroke-linejoin="round"><path d="M684.9 458.8 H686.7 L689.4 457.0 V463.4 L686.7 461.6 H684.9 Z"/><path d="M690.7 458.0 Q692.5 460.2 690.7 462.4"/></g>
<rect x="670.0" y="454.2" width="12.1" height="12.3" fill="#fff" stroke="#e2e2e2" stroke-width="0.8"/>
<g fill="none" stroke="#2e2e2e" stroke-linejoin="round"><path d="M673.4 458.1 L675.1 457.4 L677.3 457.9 L677.6 460.2 L676.1 461.7 L673.8 461.3 Z" stroke-width="0.85"/><path d="M676.9 461.3 L679.1 463.2" stroke-width="1.25"/><path d="M676.6 456.6 L677.0 457.4 M672.5 459.4 L673.3 459.6" stroke-width="0.6"/></g>
<rect x="713.6" y="454.2" width="33.7" height="32.1" fill="#fff" stroke="#e2e2e2" stroke-width="0.8"/>
<text x="730.5" y="474.2" font-size="12.6" fill="#111" text-anchor="middle" class="sf">T</text>
<rect x="735.1" y="454.2" width="12.2" height="12.3" fill="#fff" stroke="#e2e2e2" stroke-width="0.8"/>
<g fill="none" stroke="#a6a6a6" stroke-width="0.8" stroke-linejoin="round"><path d="M737.9 458.8 H739.7 L742.4 457.0 V463.4 L739.7 461.6 H737.9 Z"/><path d="M743.7 458.0 Q745.5 460.2 743.7 462.4"/></g>
<rect x="773.5" y="454.2" width="33.0" height="32.1" fill="#fff" stroke="#e2e2e2" stroke-width="0.8"/>
<text x="790.0" y="474.2" font-size="12.6" fill="#111" text-anchor="middle" class="sf">T</text>
<rect x="794.3" y="454.2" width="12.2" height="12.3" fill="#fff" stroke="#e2e2e2" stroke-width="0.8"/>
<g fill="none" stroke="#a6a6a6" stroke-width="0.8" stroke-linejoin="round"><path d="M797.1 458.8 H798.9 L801.6 457.0 V463.4 L798.9 461.6 H797.1 Z"/><path d="M802.9 458.0 Q804.7 460.2 802.9 462.4"/></g>
<rect x="782.2" y="454.2" width="12.1" height="12.3" fill="#fff" stroke="#e2e2e2" stroke-width="0.8"/>
<g fill="none" stroke="#2e2e2e" stroke-linejoin="round"><path d="M785.6 458.1 L787.3 457.4 L789.5 457.9 L789.8 460.2 L788.3 461.7 L786.0 461.3 Z" stroke-width="0.85"/><path d="M789.1 461.3 L791.3 463.2" stroke-width="1.25"/><path d="M788.8 456.6 L789.2 457.4 M784.7 459.4 L785.5 459.6" stroke-width="0.6"/></g>
<rect x="811.7" y="454.2" width="33.7" height="32.1" fill="#fff" stroke="#e2e2e2" stroke-width="0.8"/>
<text x="828.5" y="474.2" font-size="12.6" fill="#111" text-anchor="middle" class="sf">T</text>
<rect x="833.2" y="454.2" width="12.2" height="12.3" fill="#fff" stroke="#e2e2e2" stroke-width="0.8"/>
<g fill="none" stroke="#a6a6a6" stroke-width="0.8" stroke-linejoin="round"><path d="M836.0 458.8 H837.8 L840.5 457.0 V463.4 L837.8 461.6 H836.0 Z"/><path d="M841.8 458.0 Q843.6 460.2 841.8 462.4"/></g>
<rect x="821.1" y="454.2" width="12.1" height="12.3" fill="#fff" stroke="#e2e2e2" stroke-width="0.8"/>
<g fill="none" stroke="#2e2e2e" stroke-linejoin="round"><path d="M824.5 458.1 L826.2 457.4 L828.4 457.9 L828.7 460.2 L827.2 461.7 L824.9 461.3 Z" stroke-width="0.85"/><path d="M828.0 461.3 L830.2 463.2" stroke-width="1.25"/><path d="M827.7 456.6 L828.1 457.4 M823.6 459.4 L824.4 459.6" stroke-width="0.6"/></g>
<rect x="850.5" y="454.2" width="33.0" height="32.1" fill="#fff" stroke="#e2e2e2" stroke-width="0.8"/>
<text x="867.0" y="474.2" font-size="12.6" fill="#111" text-anchor="middle" class="sf">T</text>
<rect x="871.3" y="454.2" width="12.2" height="12.3" fill="#fff" stroke="#e2e2e2" stroke-width="0.8"/>
<g fill="none" stroke="#a6a6a6" stroke-width="0.8" stroke-linejoin="round"><path d="M874.1 458.8 H875.9 L878.6 457.0 V463.4 L875.9 461.6 H874.1 Z"/><path d="M879.9 458.0 Q881.7 460.2 879.9 462.4"/></g>
<rect x="859.2" y="454.2" width="12.1" height="12.3" fill="#fff" stroke="#e2e2e2" stroke-width="0.8"/>
<g fill="none" stroke="#2e2e2e" stroke-linejoin="round"><path d="M862.6 458.1 L864.3 457.4 L866.5 457.9 L866.8 460.2 L865.3 461.7 L863.0 461.3 Z" stroke-width="0.85"/><path d="M866.1 461.3 L868.3 463.2" stroke-width="1.25"/><path d="M865.8 456.6 L866.2 457.4 M861.7 459.4 L862.5 459.6" stroke-width="0.6"/></g>
<rect x="889.6" y="454.2" width="33.3" height="32.1" fill="#fff" stroke="#e2e2e2" stroke-width="0.8"/>
<text x="906.2" y="474.2" font-size="12.6" fill="#111" text-anchor="middle" class="sf">T</text>
<rect x="910.7" y="454.2" width="12.2" height="12.3" fill="#fff" stroke="#e2e2e2" stroke-width="0.8"/>
<g fill="none" stroke="#a6a6a6" stroke-width="0.8" stroke-linejoin="round"><path d="M913.5 458.8 H915.3 L918.0 457.0 V463.4 L915.3 461.6 H913.5 Z"/><path d="M919.3 458.0 Q921.1 460.2 919.3 462.4"/></g>
<rect x="105.2" y="493.5" width="105.3" height="12.3" fill="#fff" stroke="#e2e2e2" stroke-width="0.8"/>
<path d="M107.7 502 L112.8 495.9 M108.8 504.3 L115.8 495.9 M112 504.3 L116.4 499" stroke="#6a6a6a" stroke-width="1.15"/>
<text x="119" y="502.8" font-size="8.6" fill="#444" textLength="85.3" lengthAdjust="spacingAndGlyphs" stroke="#444" stroke-width="0.24">Background(Fade In Out)</text>
<rect x="221.79999999999998" y="494.70000000000005" width="10.8" height="10.8" fill="#e0e0e0" transform="rotate(45 227.2 500.1)"/>
<path d="M223.89999999999998 500.1 H230.5 M227.2 496.8 V503.40000000000003" stroke="#505050" stroke-width="1.45"/>
<rect x="111.5" y="513.8000000000001" width="10.8" height="10.8" fill="#e0e0e0" transform="rotate(45 116.9 519.2)"/>
<path d="M113.60000000000001 519.2 H120.2 M116.9 515.9000000000001 V522.5" stroke="#505050" stroke-width="1.45"/>
<rect x="105.2" y="531.7" width="388" height="12.4" fill="#fff" stroke="#e2e2e2" stroke-width="0.8"/>
<rect x="498.8" y="531.7" width="456.6" height="12.4" fill="#fff" stroke="#e2e2e2" stroke-width="0.8"/>
<path d="M107.0 537.7L107.6 537.7L108.2 535.9L108.8 535.7L109.4 534.3L110.0 536.2L110.6 534.9L111.2 532.7L111.8 536.5L112.4 536.4L113.0 536.1L113.6 533.6L114.2 535.0L114.8 535.2L115.4 533.4L116.0 536.1L116.6 534.1L117.2 535.0L117.8 536.4L118.4 534.7L119.0 535.9L119.6 536.3L120.2 532.5L120.8 536.3L121.4 534.2L122.0 535.7L122.6 535.8L123.2 535.8L123.8 532.4L124.4 533.7L125.0 533.4L125.6 533.0L126.2 534.2L126.8 536.5L127.4 535.7L128.0 535.2L128.6 536.2L129.2 537.5L129.8 537.3L130.4 535.6L131.0 535.5L131.6 537.2L132.2 536.8L132.8 535.7L133.4 536.8L134.0 536.9L134.6 536.4L135.2 537.2L135.8 536.9L136.4 536.7L137.0 536.5L137.6 536.1L138.2 537.4L138.8 537.0L139.4 536.9L140.0 534.7L140.6 535.9L141.2 532.8L141.8 533.2L142.4 533.8L143.0 535.0L143.6 534.6L144.2 534.6L144.8 533.9L145.4 534.2L146.0 534.8L146.6 535.6L147.2 534.7L147.8 534.2L148.4 533.2L149.0 535.4L149.6 535.4L150.2 534.8L150.8 534.7L151.4 533.1L152.0 535.3L152.6 535.9L153.2 533.1L153.8 536.1L154.4 536.0L155.0 534.6L155.6 532.8L156.2 536.5L156.8 535.7L157.4 535.3L158.0 535.9L158.6 533.8L159.2 535.8L159.8 534.3L160.4 532.4L161.0 535.5L161.6 534.9L162.2 535.9L162.8 534.8L163.4 535.1L164.0 535.7L164.6 537.0L165.2 537.7L165.8 537.7L166.4 537.7L167.0 537.7L167.6 537.7L168.2 537.7L168.8 537.7L169.4 537.7L170.0 537.7L170.6 537.7L171.2 537.7L171.8 537.7L172.4 536.9L173.0 534.7L173.6 535.5L174.2 535.2L174.8 536.2L175.4 536.5L176.0 536.5L176.6 536.3L177.2 536.7L177.8 535.0L178.4 535.8L179.0 536.6L179.6 535.4L180.2 535.1L180.8 536.1L181.4 536.4L182.0 536.3L182.6 537.0L183.2 537.7L183.8 537.7L184.4 537.7L185.0 537.7L185.6 537.7L186.2 537.7L186.8 537.7L187.4 537.7L188.0 537.4L188.6 535.2L189.2 536.7L189.8 535.3L190.4 536.9L191.0 535.8L191.6 537.5L192.2 537.7L192.8 537.4L193.4 537.5L194.0 537.4L194.6 537.4L195.2 537.7L195.8 537.7L196.4 537.7L197.0 537.7L197.6 537.7L198.2 537.7L198.8 537.7L199.4 537.7L200.0 537.7L200.6 537.7L201.2 537.7L201.8 537.7L202.4 537.7L203.0 537.7L203.6 537.7L204.2 537.7L204.8 537.7L205.4 537.7L206.0 537.7L206.6 537.7L207.2 537.7L207.8 537.7L208.4 537.7L209.0 537.7L209.6 537.7L210.2 537.7L210.8 537.7L211.4 537.7L212.0 537.7L212.6 537.7L213.2 537.7L213.8 537.7L214.4 537.7L215.0 537.7L215.6 537.7L216.2 537.1L216.8 537.0L217.4 533.9L218.0 536.8L218.6 535.5L219.2 535.7L219.8 535.8L220.4 535.9L221.0 537.2L221.6 537.7L222.2 537.7L222.8 537.7L223.4 537.7L224.0 537.7L224.6 537.7L225.2 537.7L225.8 537.7L226.4 537.7L227.0 537.7L227.6 537.7L228.2 537.7L228.8 537.7L229.4 537.7L230.0 537.7L230.6 537.7L231.2 537.7L231.8 537.7L232.4 537.7L233.0 535.0L233.6 533.8L234.2 534.6L234.8 535.8L235.4 535.7L236.0 536.6L236.6 537.7L237.2 537.7L237.8 537.7L238.4 537.7L239.0 537.7L239.6 537.7L240.2 537.7L240.8 537.7L241.4 537.7L242.0 537.4L242.6 537.0L243.2 537.4L243.8 537.7L244.4 537.7L245.0 537.7L245.6 537.7L246.2 537.7L246.8 537.7L247.4 537.7L248.0 537.7L248.6 537.7L249.2 537.7L249.8 537.2L250.4 537.0L251.0 536.8L251.6 536.9L252.2 537.1L252.8 536.8L253.4 537.3L254.0 537.3L254.6 536.7L255.2 536.9L255.8 536.9L256.4 536.6L257.0 536.5L257.6 536.6L258.2 536.8L258.8 537.3L259.4 537.7L260.0 537.7L260.6 537.7L261.2 537.7L261.8 537.7L262.4 537.7L263.0 537.7L263.6 537.7L264.2 537.7L264.8 537.7L265.4 537.7L266.0 537.7L266.6 537.7L267.2 537.7L267.8 537.7L268.4 537.7L269.0 537.7L269.6 537.7L270.2 537.7L270.8 537.7L271.4 537.7L272.0 537.7L272.6 537.7L273.2 537.7L273.8 537.7L274.4 537.7L275.0 537.7L275.6 537.7L276.2 537.7L276.8 537.7L277.4 537.7L278.0 537.7L278.6 537.7L279.2 537.7L279.8 537.7L280.4 537.7L281.0 537.7L281.6 537.7L282.2 537.7L282.8 537.7L283.4 537.7L284.0 537.7L284.6 537.7L285.2 537.7L285.8 537.7L286.4 537.7L287.0 537.7L287.6 537.7L288.2 537.7L288.8 537.7L289.4 537.7L290.0 537.7L290.6 537.7L291.2 537.7L291.8 537.7L292.4 537.7L293.0 537.7L293.6 537.7L294.2 537.3L294.8 535.2L295.4 536.1L296.0 536.4L296.6 535.5L297.2 537.3L297.8 537.7L298.4 537.7L299.0 537.7L299.6 537.7L300.2 537.7L300.8 537.7L301.4 537.7L302.0 537.3L302.6 536.3L303.2 534.0L303.8 535.1L304.4 535.9L305.0 537.2L305.6 537.7L306.2 537.7L306.8 537.7L307.4 537.7L308.0 537.7L308.6 537.7L309.2 537.7L309.8 537.7L310.4 537.7L311.0 537.4L311.6 537.0L312.2 535.1L312.8 534.4L313.4 534.8L314.0 535.8L314.6 536.0L315.2 534.1L315.8 535.7L316.4 534.3L317.0 532.8L317.6 534.9L318.2 533.5L318.8 534.3L319.4 533.4L320.0 534.8L320.6 534.1L321.2 535.8L321.8 536.0L322.4 535.8L323.0 536.3L323.6 534.4L324.2 536.2L324.8 533.9L325.4 536.3L326.0 534.3L326.6 536.3L327.2 534.4L327.8 533.9L328.4 533.1L329.0 534.6L329.6 536.5L330.2 535.1L330.8 537.1L331.4 537.7L332.0 537.7L332.6 537.7L333.2 537.7L333.8 537.7L334.4 537.7L335.0 537.7L335.6 537.7L336.2 537.7L336.8 537.7L337.4 537.7L338.0 537.7L338.6 537.7L339.2 537.7L339.8 537.7L340.4 537.7L341.0 537.7L341.6 537.7L342.2 537.7L342.8 537.7L343.4 537.7L344.0 537.7L344.6 537.7L345.2 537.7L345.8 537.7L346.4 537.7L347.0 537.7L347.6 537.7L348.2 537.2L348.8 536.0L349.4 535.0L350.0 536.3L350.6 535.8L351.2 535.0L351.8 537.1L352.4 537.2L353.0 537.7L353.6 537.7L354.2 537.7L354.8 537.7L355.4 537.7L356.0 537.7L356.6 537.7L357.2 537.7L357.8 537.7L358.4 537.7L359.0 537.7L359.6 537.7L360.2 537.3L360.8 536.8L361.4 536.2L362.0 536.4L362.6 536.6L363.2 535.9L363.8 535.4L364.4 536.8L365.0 535.2L365.6 535.9L366.2 536.8L366.8 536.6L367.4 535.1L368.0 536.8L368.6 537.7L369.2 537.7L369.8 537.7L370.4 537.7L371.0 537.7L371.6 537.7L372.2 535.5L372.8 536.0L373.4 536.0L374.0 536.3L374.6 536.3L375.2 537.7L375.8 537.7L376.4 537.7L377.0 537.7L377.6 537.7L378.2 537.7L378.8 537.7L379.4 537.7L380.0 537.7L380.6 537.7L381.2 537.7L381.8 537.7L382.4 537.2L383.0 537.3L383.6 535.8L384.2 536.5L384.8 534.9L385.4 536.0L386.0 536.3L386.6 535.9L387.2 537.0L387.8 537.7L388.4 537.7L389.0 536.3L389.6 537.0L390.2 533.7L390.8 536.2L391.4 536.1L392.0 536.8L392.6 536.6L393.2 536.5L393.8 535.9L394.4 536.8L395.0 536.5L395.6 537.7L396.2 537.7L396.8 537.7L397.4 537.7L398.0 536.5L398.6 534.9L399.2 536.1L399.8 536.7L400.4 537.7L401.0 537.7L401.6 537.7L402.2 537.7L402.8 537.7L403.4 537.7L404.0 537.7L404.6 537.7L405.2 537.7L405.8 537.7L406.4 537.7L407.0 537.7L407.6 537.7L408.2 537.7L408.8 537.7L409.4 537.7L410.0 537.7L410.6 537.7L411.2 537.7L411.8 537.7L412.4 537.7L413.0 537.7L413.6 537.5L414.2 536.5L414.8 536.3L415.4 536.5L416.0 536.4L416.6 536.0L417.2 537.1L417.8 535.8L418.4 536.9L419.0 536.9L419.6 536.6L420.2 537.0L420.8 535.7L421.4 536.2L422.0 536.9L422.6 537.0L423.2 536.2L423.8 536.5L424.4 535.9L425.0 536.2L425.6 537.3L426.2 536.9L426.8 537.6L427.4 537.1L428.0 536.3L428.6 534.4L429.2 536.0L429.8 536.2L430.4 536.6L431.0 536.2L431.6 536.2L432.2 536.4L432.8 534.3L433.4 536.1L434.0 536.1L434.6 537.7L435.2 537.7L435.8 537.7L436.4 537.7L437.0 537.7L437.6 537.7L438.2 537.7L438.8 537.7L439.4 537.7L440.0 537.4L440.6 536.4L441.2 536.6L441.8 534.9L442.4 536.3L443.0 536.4L443.6 535.4L444.2 536.8L444.8 536.1L445.4 536.2L446.0 534.6L446.6 535.3L447.2 536.8L447.8 535.7L448.4 536.1L449.0 536.8L449.6 535.2L450.2 536.7L450.8 536.8L451.4 537.7L452.0 537.7L452.6 537.7L453.2 537.7L453.8 537.7L454.4 537.7L455.0 537.7L455.6 537.7L456.2 537.0L456.8 536.9L457.4 536.4L458.0 536.0L458.6 537.1L459.2 537.7L459.8 537.7L460.4 537.7L461.0 537.7L461.6 537.7L462.2 537.7L462.8 537.7L463.4 537.7L464.0 537.7L464.6 537.7L465.2 537.7L465.8 537.7L466.4 537.7L467.0 537.7L467.6 537.7L468.2 536.9L468.8 535.4L469.4 536.3L470.0 536.6L470.6 536.3L471.2 534.9L471.8 536.5L472.4 536.3L473.0 536.6L473.6 534.0L474.2 536.4L474.8 535.9L475.4 534.7L476.0 536.6L476.6 537.0L477.2 537.7L477.8 537.5L478.4 537.3L479.0 537.0L479.6 537.0L480.2 537.3L480.8 536.6L481.4 536.3L482.0 537.2L482.6 537.2L483.2 536.6L483.8 537.4L484.4 537.6L485.0 537.2L485.6 537.6L486.2 537.6L486.8 537.4L487.4 537.5L488.0 537.3L488.6 537.5L489.2 537.3L489.8 537.5L490.4 537.7L491.0 537.7L491.0 538.2L490.4 538.3L489.8 538.5L489.2 538.7L488.6 538.4L488.0 538.6L487.4 538.5L486.8 538.5L486.2 538.4L485.6 538.4L485.0 538.9L484.4 538.5L483.8 538.5L483.2 539.3L482.6 538.9L482.0 538.6L481.4 539.5L480.8 539.3L480.2 538.6L479.6 539.0L479.0 539.1L478.4 538.7L477.8 538.5L477.2 538.3L476.6 539.0L476.0 539.6L475.4 541.0L474.8 540.4L474.2 539.9L473.6 541.6L473.0 539.3L472.4 539.3L471.8 539.7L471.2 540.6L470.6 540.2L470.0 539.4L469.4 539.4L468.8 540.4L468.2 539.1L467.6 538.3L467.0 538.4L466.4 538.3L465.8 538.4L465.2 538.3L464.6 538.3L464.0 538.2L463.4 538.3L462.8 538.3L462.2 538.2L461.6 538.3L461.0 538.4L460.4 538.3L459.8 538.3L459.2 538.4L458.6 538.9L458.0 539.8L457.4 539.9L456.8 538.8L456.2 539.0L455.6 538.3L455.0 538.2L454.4 538.3L453.8 538.3L453.2 538.2L452.6 538.4L452.0 538.3L451.4 538.3L450.8 538.9L450.2 539.2L449.6 541.2L449.0 539.0L448.4 540.2L447.8 540.0L447.2 539.1L446.6 540.2L446.0 541.5L445.4 539.4L444.8 539.8L444.2 538.9L443.6 541.1L443.0 539.7L442.4 539.8L441.8 540.7L441.2 539.6L440.6 539.7L440.0 538.5L439.4 538.3L438.8 538.4L438.2 538.3L437.6 538.3L437.0 538.3L436.4 538.3L435.8 538.3L435.2 538.3L434.6 538.3L434.0 539.6L433.4 539.8L432.8 540.8L432.2 539.3L431.6 539.5L431.0 539.4L430.4 539.3L429.8 539.9L429.2 540.5L428.6 541.2L428.0 539.6L427.4 539.1L426.8 538.4L426.2 538.9L425.6 538.7L425.0 539.7L424.4 539.7L423.8 539.9L423.2 539.4L422.6 538.8L422.0 539.4L421.4 539.8L420.8 540.0L420.2 538.9L419.6 539.8L419.0 538.9L418.4 538.8L417.8 540.1L417.2 538.7L416.6 539.7L416.0 539.6L415.4 539.2L414.8 539.9L414.2 539.4L413.6 538.7L413.0 538.3L412.4 538.3L411.8 538.3L411.2 538.3L410.6 538.3L410.0 538.3L409.4 538.2L408.8 538.3L408.2 538.3L407.6 538.3L407.0 538.2L406.4 538.2L405.8 538.3L405.2 538.3L404.6 538.3L404.0 538.3L403.4 538.3L402.8 538.4L402.2 538.3L401.6 538.2L401.0 538.3L400.4 538.4L399.8 539.2L399.2 540.2L398.6 541.0L398.0 539.9L397.4 538.3L396.8 538.3L396.2 538.3L395.6 538.3L395.0 539.4L394.4 539.0L393.8 540.3L393.2 539.4L392.6 539.4L392.0 539.2L391.4 540.2L390.8 540.0L390.2 542.6L389.6 538.8L389.0 539.7L388.4 538.3L387.8 538.3L387.2 539.2L386.6 539.7L386.0 540.2L385.4 540.0L384.8 541.8L384.2 539.3L383.6 540.7L383.0 538.7L382.4 538.7L381.8 538.3L381.2 538.4L380.6 538.3L380.0 538.3L379.4 538.4L378.8 538.3L378.2 538.2L377.6 538.3L377.0 538.3L376.4 538.3L375.8 538.4L375.2 538.3L374.6 539.4L374.0 539.9L373.4 539.6L372.8 539.8L372.2 540.7L371.6 538.3L371.0 538.3L370.4 538.2L369.8 538.3L369.2 538.3L368.6 538.3L368.0 539.4L367.4 540.9L366.8 539.1L366.2 539.0L365.6 540.2L365.0 540.3L364.4 538.9L363.8 541.1L363.2 540.2L362.6 539.5L362.0 539.8L361.4 539.7L360.8 539.1L360.2 538.8L359.6 538.3L359.0 538.3L358.4 538.3L357.8 538.3L357.2 538.3L356.6 538.2L356.0 538.3L355.4 538.3L354.8 538.4L354.2 538.3L353.6 538.3L353.0 538.2L352.4 538.9L351.8 538.9L351.2 540.8L350.6 539.8L350.0 539.5L349.4 541.6L348.8 539.8L348.2 538.9L347.6 538.2L347.0 538.3L346.4 538.3L345.8 538.2L345.2 538.3L344.6 538.4L344.0 538.3L343.4 538.2L342.8 538.3L342.2 538.2L341.6 538.3L341.0 538.3L340.4 538.4L339.8 538.3L339.2 538.3L338.6 538.4L338.0 538.3L337.4 538.3L336.8 538.2L336.2 538.2L335.6 538.3L335.0 538.3L334.4 538.3L333.8 538.3L333.2 538.3L332.6 538.2L332.0 538.3L331.4 538.3L330.8 539.2L330.2 540.9L329.6 539.9L329.0 541.3L328.4 542.5L327.8 541.6L327.2 541.6L326.6 539.5L326.0 541.2L325.4 539.5L324.8 541.3L324.2 539.9L323.6 541.0L323.0 539.3L322.4 540.8L321.8 539.7L321.2 540.7L320.6 541.8L320.0 541.6L319.4 543.6L318.8 542.3L318.2 543.3L317.6 541.4L317.0 543.1L316.4 541.4L315.8 540.3L315.2 541.4L314.6 539.7L314.0 540.6L313.4 540.5L312.8 540.8L312.2 541.6L311.6 539.0L311.0 538.7L310.4 538.3L309.8 538.4L309.2 538.3L308.6 538.3L308.0 538.3L307.4 538.3L306.8 538.3L306.2 538.3L305.6 538.3L305.0 538.8L304.4 540.5L303.8 540.7L303.2 541.9L302.6 540.1L302.0 538.5L301.4 538.3L300.8 538.2L300.2 538.3L299.6 538.3L299.0 538.3L298.4 538.3L297.8 538.2L297.2 538.8L296.6 540.8L296.0 539.6L295.4 539.5L294.8 540.6L294.2 538.8L293.6 538.4L293.0 538.3L292.4 538.3L291.8 538.3L291.2 538.3L290.6 538.3L290.0 538.3L289.4 538.3L288.8 538.3L288.2 538.3L287.6 538.2L287.0 538.2L286.4 538.4L285.8 538.3L285.2 538.3L284.6 538.3L284.0 538.3L283.4 538.3L282.8 538.3L282.2 538.3L281.6 538.3L281.0 538.2L280.4 538.2L279.8 538.3L279.2 538.2L278.6 538.3L278.0 538.3L277.4 538.3L276.8 538.2L276.2 538.2L275.6 538.4L275.0 538.4L274.4 538.4L273.8 538.3L273.2 538.3L272.6 538.3L272.0 538.3L271.4 538.3L270.8 538.3L270.2 538.3L269.6 538.3L269.0 538.3L268.4 538.3L267.8 538.3L267.2 538.4L266.6 538.2L266.0 538.3L265.4 538.3L264.8 538.4L264.2 538.4L263.6 538.3L263.0 538.3L262.4 538.3L261.8 538.3L261.2 538.3L260.6 538.3L260.0 538.3L259.4 538.3L258.8 538.5L258.2 539.3L257.6 539.6L257.0 539.6L256.4 539.2L255.8 539.0L255.2 539.3L254.6 539.4L254.0 538.8L253.4 538.6L252.8 539.3L252.2 539.0L251.6 539.2L251.0 539.5L250.4 539.0L249.8 538.7L249.2 538.4L248.6 538.3L248.0 538.3L247.4 538.4L246.8 538.3L246.2 538.4L245.6 538.3L245.0 538.3L244.4 538.4L243.8 538.3L243.2 538.5L242.6 538.8L242.0 538.7L241.4 538.4L240.8 538.3L240.2 538.3L239.6 538.3L239.0 538.4L238.4 538.3L237.8 538.3L237.2 538.3L236.6 538.3L236.0 539.3L235.4 540.0L234.8 540.1L234.2 541.1L233.6 542.0L233.0 541.3L232.4 538.3L231.8 538.3L231.2 538.3L230.6 538.3L230.0 538.4L229.4 538.3L228.8 538.3L228.2 538.4L227.6 538.3L227.0 538.3L226.4 538.3L225.8 538.3L225.2 538.4L224.6 538.3L224.0 538.3L223.4 538.4L222.8 538.2L222.2 538.3L221.6 538.2L221.0 538.7L220.4 540.0L219.8 540.4L219.2 540.2L218.6 540.3L218.0 539.5L217.4 543.0L216.8 538.9L216.2 539.0L215.6 538.2L215.0 538.2L214.4 538.2L213.8 538.3L213.2 538.3L212.6 538.3L212.0 538.3L211.4 538.3L210.8 538.2L210.2 538.4L209.6 538.4L209.0 538.3L208.4 538.3L207.8 538.2L207.2 538.3L206.6 538.3L206.0 538.2L205.4 538.3L204.8 538.3L204.2 538.3L203.6 538.2L203.0 538.3L202.4 538.3L201.8 538.4L201.2 538.4L200.6 538.3L200.0 538.3L199.4 538.4L198.8 538.3L198.2 538.3L197.6 538.3L197.0 538.4L196.4 538.3L195.8 538.4L195.2 538.4L194.6 538.6L194.0 538.5L193.4 538.5L192.8 538.6L192.2 538.3L191.6 538.4L191.0 540.5L190.4 539.2L189.8 540.6L189.2 539.3L188.6 540.5L188.0 538.5L187.4 538.3L186.8 538.3L186.2 538.3L185.6 538.3L185.0 538.3L184.4 538.3L183.8 538.4L183.2 538.2L182.6 539.0L182.0 539.4L181.4 540.0L180.8 540.2L180.2 540.6L179.6 540.6L179.0 539.3L178.4 539.7L177.8 541.7L177.2 539.5L176.6 539.4L176.0 539.3L175.4 539.7L174.8 540.0L174.2 540.2L173.6 541.1L173.0 541.4L172.4 539.3L171.8 538.3L171.2 538.3L170.6 538.3L170.0 538.3L169.4 538.3L168.8 538.3L168.2 538.4L167.6 538.3L167.0 538.4L166.4 538.3L165.8 538.3L165.2 538.4L164.6 539.1L164.0 540.5L163.4 541.5L162.8 541.6L162.2 540.3L161.6 540.6L161.0 539.9L160.4 542.7L159.8 542.2L159.2 540.1L158.6 541.4L158.0 539.6L157.4 540.1L156.8 540.4L156.2 539.8L155.6 543.0L155.0 541.1L154.4 539.9L153.8 539.9L153.2 544.0L152.6 540.5L152.0 540.4L151.4 543.8L150.8 541.2L150.2 540.9L149.6 540.8L149.0 540.2L148.4 541.6L147.8 542.0L147.2 540.9L146.6 539.8L146.0 541.7L145.4 542.3L144.8 542.9L144.2 540.7L143.6 541.2L143.0 541.6L142.4 543.0L141.8 542.4L141.2 543.8L140.6 540.4L140.0 542.1L139.4 539.1L138.8 539.2L138.2 538.4L137.6 540.0L137.0 539.8L136.4 539.1L135.8 538.9L135.2 538.7L134.6 539.9L134.0 539.4L133.4 538.9L132.8 540.1L132.2 539.1L131.6 538.9L131.0 540.4L130.4 541.0L129.8 538.8L129.2 538.6L128.6 539.5L128.0 540.8L127.4 540.1L126.8 539.6L126.2 541.4L125.6 542.4L125.0 541.7L124.4 542.1L123.8 543.0L123.2 540.0L122.6 539.8L122.0 540.6L121.4 541.9L120.8 539.3L120.2 542.4L119.6 539.6L119.0 540.4L118.4 541.1L117.8 540.0L117.2 541.5L116.6 542.5L116.0 539.5L115.4 542.2L114.8 541.5L114.2 540.9L113.6 542.7L113.0 539.9L112.4 539.4L111.8 539.5L111.2 543.7L110.6 541.8L110.0 540.1L109.4 540.9L108.8 540.3L108.2 540.1L107.6 538.3L107.0 538.3Z" fill="#8a909d"/>
<path d="M500.5 537.7L501.1 536.4L501.7 536.4L502.3 532.4L502.9 534.3L503.5 533.6L504.1 534.6L504.7 536.2L505.3 537.3L505.9 535.3L506.5 536.9L507.1 536.4L507.7 536.8L508.3 535.6L508.9 535.9L509.5 535.8L510.1 535.5L510.7 534.3L511.3 534.7L511.9 535.2L512.5 535.1L513.1 535.9L513.7 536.8L514.3 537.7L514.9 537.7L515.5 537.7L516.1 537.7L516.7 537.7L517.3 537.7L517.9 537.7L518.5 537.7L519.1 537.7L519.7 537.7L520.3 537.7L520.9 537.7L521.5 536.5L522.1 535.0L522.7 536.6L523.3 536.3L523.9 536.7L524.5 537.7L525.1 537.7L525.7 537.7L526.3 537.7L526.9 536.7L527.5 534.0L528.1 535.2L528.7 536.4L529.3 532.2L529.9 534.6L530.5 536.2L531.1 537.7L531.7 537.7L532.3 537.7L532.9 537.7L533.5 537.7L534.1 537.7L534.7 536.2L535.3 536.6L535.9 535.9L536.5 534.0L537.1 534.6L537.7 535.4L538.3 534.4L538.9 535.6L539.5 535.8L540.1 536.1L540.7 535.1L541.3 535.5L541.9 536.6L542.5 536.3L543.1 534.8L543.7 533.7L544.3 534.1L544.9 535.0L545.5 535.4L546.1 532.9L546.7 534.8L547.3 536.5L547.9 535.4L548.5 535.8L549.1 533.6L549.7 533.6L550.3 535.3L550.9 533.7L551.5 533.3L552.1 535.5L552.7 535.3L553.3 535.5L553.9 535.5L554.5 535.4L555.1 536.3L555.7 535.7L556.3 535.0L556.9 536.2L557.5 536.1L558.1 536.2L558.7 536.9L559.3 537.2L559.9 536.7L560.5 536.6L561.1 536.7L561.7 537.0L562.3 535.4L562.9 536.7L563.5 536.9L564.1 537.1L564.7 536.6L565.3 535.5L565.9 536.1L566.5 535.3L567.1 535.2L567.7 534.8L568.3 535.1L568.9 535.8L569.5 535.4L570.1 533.4L570.7 534.0L571.3 533.9L571.9 533.8L572.5 535.0L573.1 536.5L573.7 537.7L574.3 537.7L574.9 537.7L575.5 537.7L576.1 537.7L576.7 537.7L577.3 537.7L577.9 537.7L578.5 537.7L579.1 537.7L579.7 537.7L580.3 537.1L580.9 537.1L581.5 537.0L582.1 536.2L582.7 537.3L583.3 537.7L583.9 537.7L584.5 537.7L585.1 537.7L585.7 537.7L586.3 537.7L586.9 537.7L587.5 537.7L588.1 537.7L588.7 537.7L589.3 537.7L589.9 537.2L590.5 536.5L591.1 536.9L591.7 536.4L592.3 534.4L592.9 536.2L593.5 535.5L594.1 536.5L594.7 536.0L595.3 536.1L595.9 536.2L596.5 536.0L597.1 536.2L597.7 535.8L598.3 535.2L598.9 536.7L599.5 535.9L600.1 536.5L600.7 537.7L601.3 537.7L601.9 537.7L602.5 537.7L603.1 537.7L603.7 537.3L604.3 537.5L604.9 537.5L605.5 537.6L606.1 537.7L606.7 537.7L607.3 537.7L607.9 537.7L608.5 537.7L609.1 537.7L609.7 537.7L610.3 537.7L610.9 537.7L611.5 537.7L612.1 537.7L612.7 537.7L613.3 537.7L613.9 537.7L614.5 537.7L615.1 537.7L615.7 537.7L616.3 537.7L616.9 537.7L617.5 537.7L618.1 537.7L618.7 537.7L619.3 537.7L619.9 537.7L620.5 537.7L621.1 537.5L621.7 537.2L622.3 535.7L622.9 535.1L623.5 536.7L624.1 534.7L624.7 536.8L625.3 536.4L625.9 536.5L626.5 536.3L627.1 536.3L627.7 536.7L628.3 536.7L628.9 536.4L629.5 536.8L630.1 537.7L630.7 537.7L631.3 536.7L631.9 536.7L632.5 534.5L633.1 536.4L633.7 536.6L634.3 535.0L634.9 536.4L635.5 536.1L636.1 535.7L636.7 534.0L637.3 534.4L637.9 535.2L638.5 536.0L639.1 536.0L639.7 535.0L640.3 535.8L640.9 536.6L641.5 536.1L642.1 536.3L642.7 534.4L643.3 534.1L643.9 536.3L644.5 535.7L645.1 535.5L645.7 536.8L646.3 536.4L646.9 537.7L647.5 537.7L648.1 537.7L648.7 537.7L649.3 537.7L649.9 537.7L650.5 537.7L651.1 537.7L651.7 537.7L652.3 537.7L652.9 537.7L653.5 537.7L654.1 537.7L654.7 537.4L655.3 534.8L655.9 536.5L656.5 537.2L657.1 535.7L657.7 536.6L658.3 535.7L658.9 536.7L659.5 536.0L660.1 535.2L660.7 537.1L661.3 534.9L661.9 536.8L662.5 535.9L663.1 537.3L663.7 537.7L664.3 537.7L664.9 537.7L665.5 537.7L666.1 537.7L666.7 537.7L667.3 537.7L667.9 537.7L668.5 537.7L669.1 537.5L669.7 537.1L670.3 535.8L670.9 535.6L671.5 535.8L672.1 536.2L672.7 536.3L673.3 536.8L673.9 536.1L674.5 535.7L675.1 534.7L675.7 536.3L676.3 536.1L676.9 535.4L677.5 536.7L678.1 535.0L678.7 536.4L679.3 537.7L679.9 537.7L680.5 537.7L681.1 537.7L681.7 537.7L682.3 537.7L682.9 537.7L683.5 537.7L684.1 537.7L684.7 536.4L685.3 535.7L685.9 537.2L686.5 537.0L687.1 537.0L687.7 537.0L688.3 535.8L688.9 535.6L689.5 536.0L690.1 535.8L690.7 537.4L691.3 537.7L691.9 537.7L692.5 537.7L693.1 537.7L693.7 537.7L694.3 537.7L694.9 537.7L695.5 537.7L696.1 537.7L696.7 537.7L697.3 537.7L697.9 537.7L698.5 537.7L699.1 537.7L699.7 537.7L700.3 537.7L700.9 537.7L701.5 537.7L702.1 537.7L702.7 537.7L703.3 537.7L703.9 537.7L704.5 537.7L705.1 537.7L705.7 537.7L706.3 537.7L706.9 537.7L707.5 537.7L708.1 537.7L708.7 537.7L709.3 537.7L709.9 537.7L710.5 537.7L711.1 537.7L711.7 537.7L712.3 537.7L712.9 537.7L713.5 537.7L714.1 537.7L714.7 537.7L715.3 537.7L715.9 537.7L716.5 537.7L717.1 537.7L717.7 537.7L718.3 537.7L718.9 537.7L719.5 537.7L720.1 537.7L720.7 537.7L721.3 537.7L721.9 537.7L722.5 537.7L723.1 537.7L723.7 537.7L724.3 537.7L724.9 537.7L725.5 537.7L726.1 537.7L726.7 536.7L727.3 535.4L727.9 535.0L728.5 535.9L729.1 536.8L729.7 534.9L730.3 534.3L730.9 536.0L731.5 534.3L732.1 536.4L732.7 536.0L733.3 535.8L733.9 535.8L734.5 536.5L735.1 534.6L735.7 535.3L736.3 535.7L736.9 536.8L737.5 536.7L738.1 537.7L738.7 537.7L739.3 536.2L739.9 535.5L740.5 535.5L741.1 536.2L741.7 534.6L742.3 536.1L742.9 534.7L743.5 536.3L744.1 535.9L744.7 535.8L745.3 533.9L745.9 536.0L746.5 536.6L747.1 533.7L747.7 535.8L748.3 536.5L748.9 537.7L749.5 537.7L750.1 537.7L750.7 537.7L751.3 537.7L751.9 537.7L752.5 537.7L753.1 537.7L753.7 537.7L754.3 537.7L754.9 537.7L755.5 537.7L756.1 537.0L756.7 535.5L757.3 535.5L757.9 535.0L758.5 532.6L759.1 534.3L759.7 535.5L760.3 537.0L760.9 537.2L761.5 537.1L762.1 535.5L762.7 536.6L763.3 536.9L763.9 536.1L764.5 536.1L765.1 535.1L765.7 536.2L766.3 535.2L766.9 535.0L767.5 535.9L768.1 536.6L768.7 536.3L769.3 536.9L769.9 536.5L770.5 535.0L771.1 536.8L771.7 536.0L772.3 536.8L772.9 535.6L773.5 536.7L774.1 536.5L774.7 536.4L775.3 536.4L775.9 536.3L776.5 535.3L777.1 536.9L777.7 535.1L778.3 535.6L778.9 535.2L779.5 535.6L780.1 535.4L780.7 536.4L781.3 534.8L781.9 536.7L782.5 534.5L783.1 536.6L783.7 534.9L784.3 536.9L784.9 537.7L785.5 537.7L786.1 537.7L786.7 537.7L787.3 537.7L787.9 537.7L788.5 537.7L789.1 537.7L789.7 537.7L790.3 537.7L790.9 537.7L791.5 537.7L792.1 537.7L792.7 537.3L793.3 536.7L793.9 536.2L794.5 534.2L795.1 534.4L795.7 535.0L796.3 536.4L796.9 536.2L797.5 535.7L798.1 536.6L798.7 536.5L799.3 536.6L799.9 533.9L800.5 536.3L801.1 534.3L801.7 535.2L802.3 536.3L802.9 537.7L803.5 537.7L804.1 537.7L804.7 537.7L805.3 537.7L805.9 537.7L806.5 537.7L807.1 537.7L807.7 537.7L808.3 537.7L808.9 537.7L809.5 537.7L810.1 537.7L810.7 536.0L811.3 535.9L811.9 535.2L812.5 536.7L813.1 534.9L813.7 535.7L814.3 535.7L814.9 535.6L815.5 536.7L816.1 537.0L816.7 537.1L817.3 537.7L817.9 537.7L818.5 537.7L819.1 537.7L819.7 537.7L820.3 537.7L820.9 537.7L821.5 537.7L822.1 537.7L822.7 537.7L823.3 537.2L823.9 536.4L824.5 536.0L825.1 536.1L825.7 536.2L826.3 535.9L826.9 536.0L827.5 533.6L828.1 535.0L828.7 534.6L829.3 535.3L829.9 536.1L830.5 534.0L831.1 536.5L831.7 536.2L832.3 535.6L832.9 534.6L833.5 534.3L834.1 535.3L834.7 534.9L835.3 535.1L835.9 534.2L836.5 536.0L837.1 536.2L837.7 536.1L838.3 534.2L838.9 535.4L839.5 536.9L840.1 537.7L840.7 537.7L841.3 537.7L841.9 537.7L842.5 537.7L843.1 537.7L843.7 537.7L844.3 537.4L844.9 537.1L845.5 536.4L846.1 536.0L846.7 534.7L847.3 536.9L847.9 535.1L848.5 535.9L849.1 535.7L849.7 536.6L850.3 536.1L850.9 535.5L851.5 536.5L852.1 534.8L852.7 536.8L853.3 537.7L853.9 537.7L854.5 537.7L855.1 537.7L855.7 537.7L856.3 537.7L856.9 537.7L857.5 537.7L858.1 537.7L858.7 537.7L859.3 537.7L859.9 537.7L860.5 537.7L861.1 537.7L861.7 537.7L862.3 537.3L862.9 537.0L863.5 534.7L864.1 536.7L864.7 536.4L865.3 534.9L865.9 535.9L866.5 536.1L867.1 536.5L867.7 535.4L868.3 534.0L868.9 535.5L869.5 534.8L870.1 535.5L870.7 535.4L871.3 535.0L871.9 536.6L872.5 536.2L873.1 537.1L873.7 537.7L874.3 537.7L874.9 537.7L875.5 537.7L876.1 537.7L876.7 537.7L877.3 536.6L877.9 534.1L878.5 535.5L879.1 535.6L879.7 534.9L880.3 533.6L880.9 535.6L881.5 534.8L882.1 534.3L882.7 536.2L883.3 535.1L883.9 535.5L884.5 535.5L885.1 535.2L885.7 534.6L886.3 535.7L886.9 535.7L887.5 534.9L888.1 534.6L888.7 536.6L889.3 533.5L889.9 534.4L890.5 534.6L891.1 535.3L891.7 536.2L892.3 536.7L892.9 537.7L893.5 537.7L894.1 537.7L894.7 537.7L895.3 537.7L895.9 537.7L896.5 537.4L897.1 536.0L897.7 536.9L898.3 537.3L898.9 537.5L899.5 537.7L900.1 537.7L900.7 537.7L901.3 537.4L901.9 536.9L902.5 535.4L903.1 536.5L903.7 535.4L904.3 536.1L904.9 536.5L905.5 537.7L906.1 537.7L906.7 537.7L907.3 537.7L907.9 537.7L908.5 537.7L909.1 537.7L909.7 537.7L910.3 537.7L910.9 537.7L911.5 537.7L912.1 537.7L912.7 537.7L913.3 537.7L913.9 537.2L914.5 536.7L915.1 536.5L915.7 536.1L916.3 535.5L916.9 536.1L917.5 536.4L918.1 535.2L918.7 533.8L919.3 534.8L919.9 534.1L920.5 535.7L921.1 535.4L921.7 537.2L922.3 537.7L922.9 537.7L923.5 537.7L924.1 537.7L924.7 537.7L925.3 537.7L925.9 537.7L926.5 536.6L927.1 534.6L927.7 534.3L928.3 535.9L928.9 536.8L929.5 537.3L930.1 537.7L930.7 537.7L931.3 537.7L931.9 537.7L932.5 537.6L933.1 536.8L933.7 537.2L934.3 537.2L934.9 535.6L935.5 536.5L936.1 536.2L936.7 537.0L937.3 536.9L937.9 536.6L938.5 535.9L939.1 537.3L939.7 537.0L940.3 536.2L940.9 537.4L941.5 536.0L942.1 536.1L942.7 536.8L943.3 537.4L943.9 537.5L944.5 537.7L945.1 537.4L945.7 537.4L946.3 537.2L946.9 537.2L947.5 537.6L948.1 537.4L948.7 537.7L949.3 537.2L949.9 537.6L950.5 537.2L951.1 537.5L951.7 537.4L952.3 537.7L952.9 537.7L953.5 537.7L954.1 537.7L954.1 538.3L953.5 538.3L952.9 538.3L952.3 538.3L951.7 538.4L951.1 538.5L950.5 539.0L949.9 538.4L949.3 538.9L948.7 538.3L948.1 538.6L947.5 538.3L946.9 538.8L946.3 538.7L945.7 538.7L945.1 538.7L944.5 538.2L943.9 538.6L943.3 538.5L942.7 539.1L942.1 539.5L941.5 540.0L940.9 538.6L940.3 539.4L939.7 539.1L939.1 538.6L938.5 540.2L937.9 539.6L937.3 539.1L936.7 539.0L936.1 540.2L935.5 539.5L934.9 539.9L934.3 538.7L933.7 538.6L933.1 539.3L932.5 538.3L931.9 538.3L931.3 538.4L930.7 538.4L930.1 538.3L929.5 538.6L928.9 539.1L928.3 540.3L927.7 541.5L927.1 541.7L926.5 539.7L925.9 538.4L925.3 538.3L924.7 538.3L924.1 538.4L923.5 538.3L922.9 538.4L922.3 538.2L921.7 538.9L921.1 540.2L920.5 540.6L919.9 541.5L919.3 541.6L918.7 541.9L918.1 540.8L917.5 539.9L916.9 539.6L916.3 540.4L915.7 539.9L915.1 539.6L914.5 539.4L913.9 538.7L913.3 538.2L912.7 538.4L912.1 538.3L911.5 538.4L910.9 538.2L910.3 538.2L909.7 538.3L909.1 538.4L908.5 538.2L907.9 538.2L907.3 538.2L906.7 538.2L906.1 538.3L905.5 538.2L904.9 539.7L904.3 540.0L903.7 540.2L903.1 539.2L902.5 540.3L901.9 539.1L901.3 538.7L900.7 538.3L900.1 538.3L899.5 538.4L898.9 538.4L898.3 538.7L897.7 539.1L897.1 540.1L896.5 538.6L895.9 538.3L895.3 538.3L894.7 538.2L894.1 538.3L893.5 538.4L892.9 538.3L892.3 539.2L891.7 539.5L891.1 541.1L890.5 540.7L889.9 541.9L889.3 541.9L888.7 539.4L888.1 540.9L887.5 540.4L886.9 540.6L886.3 540.5L885.7 542.2L885.1 540.2L884.5 540.2L883.9 540.6L883.3 540.8L882.7 540.2L882.1 541.9L881.5 541.1L880.9 539.9L880.3 541.6L879.7 540.5L879.1 540.9L878.5 540.5L877.9 541.1L877.3 539.7L876.7 538.3L876.1 538.3L875.5 538.3L874.9 538.3L874.3 538.3L873.7 538.4L873.1 539.0L872.5 539.9L871.9 539.3L871.3 541.6L870.7 540.6L870.1 540.3L869.5 541.5L868.9 540.8L868.3 542.0L867.7 540.1L867.1 539.4L866.5 539.7L865.9 540.0L865.3 541.1L864.7 539.8L864.1 539.4L863.5 540.6L862.9 539.3L862.3 538.6L861.7 538.4L861.1 538.2L860.5 538.3L859.9 538.2L859.3 538.3L858.7 538.3L858.1 538.3L857.5 538.3L856.9 538.4L856.3 538.4L855.7 538.3L855.1 538.3L854.5 538.3L853.9 538.3L853.3 538.3L852.7 539.5L852.1 541.2L851.5 539.2L850.9 540.1L850.3 540.0L849.7 539.2L849.1 540.7L848.5 540.4L847.9 541.2L847.3 538.8L846.7 540.9L846.1 539.8L845.5 539.5L844.9 538.8L844.3 538.7L843.7 538.3L843.1 538.2L842.5 538.3L841.9 538.3L841.3 538.4L840.7 538.3L840.1 538.4L839.5 539.1L838.9 540.1L838.3 541.4L837.7 540.0L837.1 539.8L836.5 540.5L835.9 542.4L835.3 541.0L834.7 540.7L834.1 541.0L833.5 541.5L832.9 541.5L832.3 540.0L831.7 539.6L831.1 539.6L830.5 542.4L829.9 539.9L829.3 540.9L828.7 541.6L828.1 540.7L827.5 542.1L826.9 540.4L826.3 540.5L825.7 540.1L825.1 540.0L824.5 539.9L823.9 539.8L823.3 539.0L822.7 538.3L822.1 538.4L821.5 538.3L820.9 538.3L820.3 538.2L819.7 538.4L819.1 538.3L818.5 538.3L817.9 538.3L817.3 538.4L816.7 539.1L816.1 539.0L815.5 539.3L814.9 540.6L814.3 540.5L813.7 540.6L813.1 540.5L812.5 539.1L811.9 541.4L811.3 539.7L810.7 540.2L810.1 538.3L809.5 538.3L808.9 538.3L808.3 538.3L807.7 538.3L807.1 538.2L806.5 538.2L805.9 538.3L805.3 538.3L804.7 538.3L804.1 538.4L803.5 538.3L802.9 538.3L802.3 540.1L801.7 540.9L801.1 541.6L800.5 539.7L799.9 541.9L799.3 539.4L798.7 539.2L798.1 539.5L797.5 540.6L796.9 540.1L796.3 539.6L795.7 541.4L795.1 542.4L794.5 542.6L793.9 539.9L793.3 539.2L792.7 538.8L792.1 538.3L791.5 538.3L790.9 538.2L790.3 538.2L789.7 538.3L789.1 538.3L788.5 538.3L787.9 538.3L787.3 538.4L786.7 538.3L786.1 538.4L785.5 538.3L784.9 538.3L784.3 539.3L783.7 540.5L783.1 539.6L782.5 541.1L781.9 539.1L781.3 541.5L780.7 539.7L780.1 540.6L779.5 540.1L778.9 540.3L778.3 540.6L777.7 541.5L777.1 539.3L776.5 540.5L775.9 539.5L775.3 540.0L774.7 539.6L774.1 539.8L773.5 539.5L772.9 540.1L772.3 539.2L771.7 539.9L771.1 539.1L770.5 540.8L769.9 539.5L769.3 539.2L768.7 540.0L768.1 539.2L767.5 539.9L766.9 540.5L766.3 541.4L765.7 539.6L765.1 540.8L764.5 539.7L763.9 539.9L763.3 538.9L762.7 539.1L762.1 540.7L761.5 538.8L760.9 538.9L760.3 538.8L759.7 539.9L759.1 541.1L758.5 543.7L757.9 541.4L757.3 540.3L756.7 541.1L756.1 538.8L755.5 538.4L754.9 538.3L754.3 538.3L753.7 538.3L753.1 538.3L752.5 538.3L751.9 538.2L751.3 538.3L750.7 538.3L750.1 538.2L749.5 538.3L748.9 538.3L748.3 539.2L747.7 539.8L747.1 543.2L746.5 539.6L745.9 540.4L745.3 543.0L744.7 540.7L744.1 539.7L743.5 539.6L742.9 541.9L742.3 540.0L741.7 541.9L741.1 540.0L740.5 541.1L739.9 540.4L739.3 539.5L738.7 538.2L738.1 538.3L737.5 539.5L736.9 539.1L736.3 539.9L735.7 540.8L735.1 540.9L734.5 539.5L733.9 539.9L733.3 540.2L732.7 540.0L732.1 539.8L731.5 541.4L730.9 540.5L730.3 540.8L729.7 541.3L729.1 539.4L728.5 540.6L727.9 540.3L727.3 540.1L726.7 539.4L726.1 538.3L725.5 538.2L724.9 538.4L724.3 538.4L723.7 538.4L723.1 538.4L722.5 538.4L721.9 538.4L721.3 538.3L720.7 538.3L720.1 538.3L719.5 538.2L718.9 538.3L718.3 538.4L717.7 538.3L717.1 538.3L716.5 538.2L715.9 538.3L715.3 538.3L714.7 538.3L714.1 538.3L713.5 538.3L712.9 538.3L712.3 538.3L711.7 538.3L711.1 538.3L710.5 538.2L709.9 538.3L709.3 538.3L708.7 538.4L708.1 538.3L707.5 538.4L706.9 538.3L706.3 538.2L705.7 538.2L705.1 538.3L704.5 538.2L703.9 538.4L703.3 538.3L702.7 538.4L702.1 538.2L701.5 538.3L700.9 538.2L700.3 538.4L699.7 538.2L699.1 538.3L698.5 538.4L697.9 538.2L697.3 538.4L696.7 538.3L696.1 538.3L695.5 538.3L694.9 538.3L694.3 538.4L693.7 538.3L693.1 538.3L692.5 538.3L691.9 538.3L691.3 538.3L690.7 538.5L690.1 539.9L689.5 540.2L688.9 540.5L688.3 540.6L687.7 539.0L687.1 538.9L686.5 538.9L685.9 538.9L685.3 540.1L684.7 539.4L684.1 538.3L683.5 538.3L682.9 538.4L682.3 538.4L681.7 538.3L681.1 538.3L680.5 538.2L679.9 538.3L679.3 538.3L678.7 539.4L678.1 540.4L677.5 539.7L676.9 540.7L676.3 539.4L675.7 539.4L675.1 541.3L674.5 540.9L673.9 539.8L673.3 539.4L672.7 539.8L672.1 539.5L671.5 540.7L670.9 540.3L670.3 540.1L669.7 538.9L669.1 538.4L668.5 538.3L667.9 538.2L667.3 538.3L666.7 538.3L666.1 538.3L665.5 538.3L664.9 538.4L664.3 538.3L663.7 538.3L663.1 538.6L662.5 540.5L661.9 539.2L661.3 541.8L660.7 538.9L660.1 540.8L659.5 539.6L658.9 539.2L658.3 540.2L657.7 539.4L657.1 540.8L656.5 538.7L655.9 539.6L655.3 540.4L654.7 538.6L654.1 538.3L653.5 538.2L652.9 538.3L652.3 538.3L651.7 538.3L651.1 538.3L650.5 538.3L649.9 538.3L649.3 538.4L648.7 538.2L648.1 538.3L647.5 538.3L646.9 538.3L646.3 539.9L645.7 539.0L645.1 539.9L644.5 540.3L643.9 539.8L643.3 542.1L642.7 541.8L642.1 539.6L641.5 540.2L640.9 539.3L640.3 539.9L639.7 541.1L639.1 539.5L638.5 539.9L637.9 540.6L637.3 541.3L636.7 542.0L636.1 540.8L635.5 539.8L634.9 539.4L634.3 540.3L633.7 539.7L633.1 539.2L632.5 541.9L631.9 539.0L631.3 539.5L630.7 538.3L630.1 538.3L629.5 539.4L628.9 539.3L628.3 539.4L627.7 539.0L627.1 539.9L626.5 539.4L625.9 539.2L625.3 539.9L624.7 539.2L624.1 541.9L623.5 539.0L622.9 541.3L622.3 540.0L621.7 538.8L621.1 538.5L620.5 538.3L619.9 538.3L619.3 538.4L618.7 538.3L618.1 538.3L617.5 538.3L616.9 538.3L616.3 538.2L615.7 538.4L615.1 538.3L614.5 538.3L613.9 538.3L613.3 538.3L612.7 538.4L612.1 538.4L611.5 538.4L610.9 538.3L610.3 538.3L609.7 538.3L609.1 538.3L608.5 538.3L607.9 538.3L607.3 538.3L606.7 538.2L606.1 538.4L605.5 538.5L604.9 538.5L604.3 538.4L603.7 538.7L603.1 538.3L602.5 538.3L601.9 538.4L601.3 538.2L600.7 538.3L600.1 539.3L599.5 539.8L598.9 539.2L598.3 540.7L597.7 540.1L597.1 540.0L596.5 540.4L595.9 539.6L595.3 540.3L594.7 540.0L594.1 539.6L593.5 540.3L592.9 540.0L592.3 541.3L591.7 539.3L591.1 539.3L590.5 539.7L589.9 538.9L589.3 538.2L588.7 538.3L588.1 538.3L587.5 538.3L586.9 538.3L586.3 538.4L585.7 538.3L585.1 538.3L584.5 538.4L583.9 538.2L583.3 538.4L582.7 538.8L582.1 539.5L581.5 539.2L580.9 538.7L580.3 539.0L579.7 538.3L579.1 538.4L578.5 538.3L577.9 538.3L577.3 538.3L576.7 538.3L576.1 538.3L575.5 538.2L574.9 538.3L574.3 538.3L573.7 538.3L573.1 539.7L572.5 541.4L571.9 543.0L571.3 542.1L570.7 542.8L570.1 542.0L569.5 540.1L568.9 540.8L568.3 541.2L567.7 540.6L567.1 541.0L566.5 540.1L565.9 540.0L565.3 540.4L564.7 539.6L564.1 538.9L563.5 539.3L562.9 539.1L562.3 540.7L561.7 538.9L561.1 539.5L560.5 539.2L559.9 539.1L559.3 539.0L558.7 539.0L558.1 540.2L557.5 539.8L556.9 539.7L556.3 540.4L555.7 540.3L555.1 539.9L554.5 540.3L553.9 540.3L553.3 540.9L552.7 540.5L552.1 539.9L551.5 543.2L550.9 541.5L550.3 541.2L549.7 542.9L549.1 542.4L548.5 539.9L547.9 540.3L547.3 539.2L546.7 540.5L546.1 543.9L545.5 541.1L544.9 541.2L544.3 541.0L543.7 542.1L543.1 540.7L542.5 539.4L541.9 539.7L541.3 540.2L540.7 540.5L540.1 539.6L539.5 540.0L538.9 540.1L538.3 541.0L537.7 540.6L537.1 542.2L536.5 541.7L535.9 540.4L535.3 539.4L534.7 539.6L534.1 538.3L533.5 538.3L532.9 538.2L532.3 538.2L531.7 538.3L531.1 538.2L530.5 540.2L529.9 541.6L529.3 542.7L528.7 539.6L528.1 540.4L527.5 541.2L526.9 539.4L526.3 538.3L525.7 538.3L525.1 538.4L524.5 538.3L523.9 539.2L523.3 539.5L522.7 539.6L522.1 540.4L521.5 539.2L520.9 538.3L520.3 538.2L519.7 538.3L519.1 538.2L518.5 538.2L517.9 538.2L517.3 538.2L516.7 538.3L516.1 538.3L515.5 538.3L514.9 538.3L514.3 538.3L513.7 539.2L513.1 540.0L512.5 541.1L511.9 541.5L511.3 541.6L510.7 541.4L510.1 540.9L509.5 540.2L508.9 539.8L508.3 539.8L507.7 539.1L507.1 539.9L506.5 539.1L505.9 541.2L505.3 538.9L504.7 539.7L504.1 541.9L503.5 542.1L502.9 541.6L502.3 542.9L501.7 539.4L501.1 539.5L500.5 538.3Z" fill="#8a909d"/>
<rect x="105.2" y="550.8" width="852" height="12.4" fill="#fff" stroke="#e2e2e2" stroke-width="0.8"/>
<path d="M463.6 554.8 H467.6 A2 2 0 0 1 467.6 559 H466.4 M466.6 559 H463.6 A2 2 0 0 1 463.6 554.8" fill="none" stroke="#444" stroke-width="0.8"/><path d="M467.2 557.8 L465.8 559 L467.2 560.2" fill="none" stroke="#444" stroke-width="0.7"/>
<text x="474.8" y="559.9" font-size="8.6" fill="#444" textLength="125.4" lengthAdjust="spacingAndGlyphs" stroke="#444" stroke-width="0.24">Cute, Wink, Naughty(Always Display)</text>
<g fill="#666"><circle cx="945" cy="557" r="0.7"/><circle cx="947.4" cy="557" r="0.7"/><circle cx="949.8" cy="557" r="0.7"/></g>
<rect x="963.2" y="493.4" width="57.6" height="12.4" fill="#fff" stroke="#d8d8d8" stroke-width="0.8"/>
<path d="M966.0 499.7 H972.4000000000001 M969.2 496.5 V502.9" stroke="#444" stroke-width="1.2"/>
<text x="977.8" y="502.7" font-size="8.6" fill="#444" textLength="40.5" lengthAdjust="spacingAndGlyphs" stroke="#444" stroke-width="0.24">Background</text>
<rect x="963.2" y="512.5" width="57.6" height="12.4" fill="#fff" stroke="#d8d8d8" stroke-width="0.8"/>
<path d="M966.4 518.8 H972.8000000000001 M969.6 515.6 V522.0" stroke="#444" stroke-width="1.2"/>
<text x="978.2" y="521.8" font-size="8.6" fill="#444" textLength="39.3" lengthAdjust="spacingAndGlyphs" stroke="#444" stroke-width="0.24">Foreground</text>
<rect x="963.2" y="531.6" width="57.6" height="12.4" fill="#fff" stroke="#d8d8d8" stroke-width="0.8"/>
<path d="M975.4 537.9 H981.8000000000001 M978.6 534.7 V541.1" stroke="#444" stroke-width="1.2"/>
<text x="987" y="540.9" font-size="8.6" fill="#444" textLength="21.4" lengthAdjust="spacingAndGlyphs" stroke="#444" stroke-width="0.24">Sound</text>
<rect x="963.2" y="550.7" width="57.6" height="12.4" fill="#fff" stroke="#d8d8d8" stroke-width="0.8"/>
<path d="M973.3 557.0 H979.7 M976.5 553.8000000000001 V560.2" stroke="#444" stroke-width="1.2"/>
<text x="985" y="560.0" font-size="8.6" fill="#444" textLength="25.6" lengthAdjust="spacingAndGlyphs" stroke="#444" stroke-width="0.24">Stickers</text>
<line x1="828.5" y1="440" x2="828.5" y2="566.4" stroke="#f03a3a" stroke-width="1" />
<path d="M822.9 430.8 H833.8 V440.6 L828.35 444.4 L822.9 440.6 Z" fill="#2f86e6" stroke="#1f6fd0" stroke-width="0.6"/>
<path d="M826.2 433.6 V439.4 M828.35 433.6 V439.4 M830.5 433.6 V439.4" stroke="#9cc7f7" stroke-width="0.7"/>
</svg>
</body></html>
